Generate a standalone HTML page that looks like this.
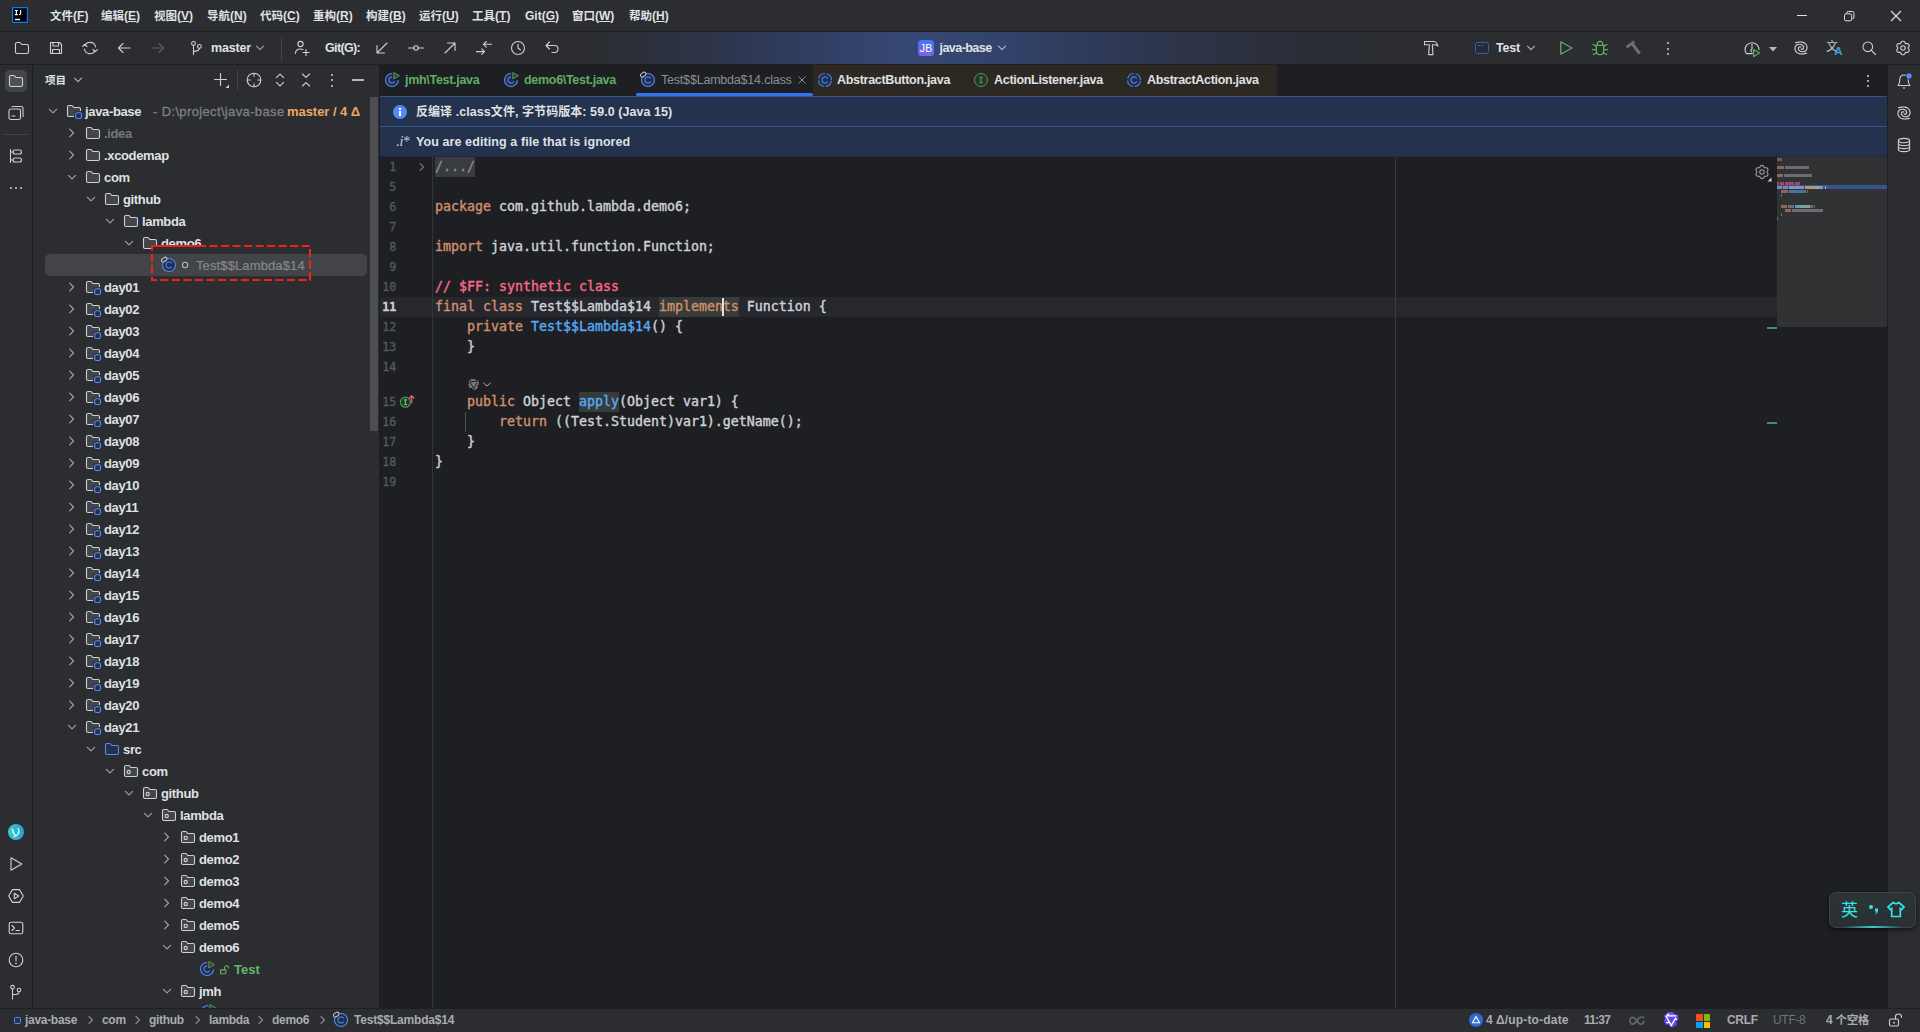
<!DOCTYPE html>
<html lang="zh-CN"><head><meta charset="utf-8"><title>java-base</title>
<style>
*{box-sizing:border-box;margin:0;padding:0}
html,body{width:1920px;height:1032px;overflow:hidden;background:#2b2d30}
body{font-family:"Liberation Sans","Noto Sans CJK SC",sans-serif;font-size:13px;color:#dfe1e5;position:relative;-webkit-font-smoothing:antialiased}
.a{position:absolute;white-space:nowrap}
.a svg{display:block}
.t{position:absolute;white-space:nowrap;line-height:24px;height:22px;font-size:13px;font-weight:bold;letter-spacing:-0.35px}
.m{position:absolute;white-space:nowrap;line-height:32px;height:32px;top:0;font-size:12px;font-weight:bold;color:#dfe1e5}
.code{position:absolute;left:435px;white-space:pre;font-family:"DejaVu Sans Mono","Liberation Mono",monospace;font-size:13.29px;line-height:20px;height:20px;color:#ced1d8;-webkit-text-stroke:0.4px}
.ln{position:absolute;left:376.2px;width:20px;text-align:right;white-space:pre;font-family:"DejaVu Sans Mono","Liberation Mono",monospace;font-size:11.7px;line-height:21px;height:20px;color:#535863;letter-spacing:-0.1px;-webkit-text-stroke:0.35px}
.z{font-weight:bold;font-size:0.96em}
.k{color:#cf8e6d}.f{color:#56a8f5}.c{color:#f9688a}
.tab{position:absolute;top:65px;height:31px;line-height:31px;font-size:12.5px;font-weight:bold;letter-spacing:-0.3px;white-space:nowrap}
.sb{position:absolute;top:1009px;height:23px;line-height:23.5px;font-size:12px;font-weight:bold;letter-spacing:-0.3px;white-space:nowrap;color:#a8abb2}
</style></head><body>
<div class="a" style="left:0;top:0;width:1920px;height:31px;background:#2b2d30"></div><div class="a" style="left:0;top:31px;width:1920px;height:1px;background:#1e1f22"></div><div class="a" style="left:0;top:32px;width:1920px;height:32px;background:linear-gradient(90deg,#2b2d30 0,#2b2d30 590px,#2d3347 700px,#313d60 800px,#354874 905px,#33436b 1000px,#2f3a58 1100px,#2d3346 1200px,#2b2e37 1300px,#2b2d30 1400px,#2b2d30 1920px)"></div><div class="a" style="left:0;top:64px;width:1920px;height:1px;background:#1e1f22"></div><div class="a" style="left:32px;top:65px;width:1px;height:943px;background:#1e1f22"></div><div class="a" style="left:379px;top:65px;width:1px;height:943px;background:#1e1f22"></div><div class="a" style="left:380px;top:65px;width:1507px;height:943px;background:#1e1f22"></div><div class="a" style="left:1887px;top:65px;width:1px;height:943px;background:#1e1f22"></div><div class="a" style="left:0;top:1008px;width:1920px;height:1px;background:#1e1f22"></div><div class="a" style="left:0;top:1009px;width:1920px;height:23px;background:#2b2d30"></div><div class="a" style="left:12px;top:7px;"><svg width="16" height="16" viewBox="0 0 16 16" style=""><rect x="0.6" y="0.6" width="14.8" height="14.8" rx="0.6" fill="#000" stroke="#087cfa" stroke-width="1.2"/><path d="M2.9 3.5 H5.8 M4.35 3.5 V7.6 M2.9 7.6 H5.8 M8.6 3 V6.5 Q8.6 7.7 7 7.6" stroke="#fff" stroke-width="1.15" fill="none"/><rect x="2.9" y="11.8" width="5.2" height="1.4" fill="#fff"/></svg></div><div class="m" style="left:50px"><span class="z">文件</span>(<u>F</u>)</div><div class="m" style="left:101px"><span class="z">编辑</span>(<u>E</u>)</div><div class="m" style="left:154px"><span class="z">视图</span>(<u>V</u>)</div><div class="m" style="left:207px"><span class="z">导航</span>(<u>N</u>)</div><div class="m" style="left:260px"><span class="z">代码</span>(<u>C</u>)</div><div class="m" style="left:313px"><span class="z">重构</span>(<u>R</u>)</div><div class="m" style="left:366px"><span class="z">构建</span>(<u>B</u>)</div><div class="m" style="left:419px"><span class="z">运行</span>(<u>U</u>)</div><div class="m" style="left:472px"><span class="z">工具</span>(<u>T</u>)</div><div class="m" style="left:525px">Git(<u>G</u>)</div><div class="m" style="left:572px"><span class="z">窗口</span>(<u>W</u>)</div><div class="m" style="left:629px"><span class="z">帮助</span>(<u>H</u>)</div><div class="a" style="left:1797px;top:15px;"><svg width="12" height="2" viewBox="0 0 12 2" style=""><rect x="0" y="0" width="10" height="1" fill="#dfe1e5"/></svg></div><div class="a" style="left:1843px;top:10px;"><svg width="12" height="12" viewBox="0 0 12 12" style=""><rect x="1.5" y="3.8" width="7.2" height="7" rx="1.6" fill="none" stroke="#dfe1e5" stroke-width="1"/><path d="M3.6 3.2 Q3.6 1.5 5.3 1.5 H9.2 Q11 1.5 11 3.3 V7 Q11 8.8 9.4 8.8" fill="none" stroke="#dfe1e5" stroke-width="1"/></svg></div><div class="a" style="left:1890px;top:10px;"><svg width="12" height="12" viewBox="0 0 12 12" style=""><path d="M1 1 L11 11 M11 1 L1 11" stroke="#dfe1e5" stroke-width="1.1" fill="none"/></svg></div><div class="a" style="left:14px;top:40px;"><svg width="16" height="16" viewBox="0 0 16 16" style=""><path d="M1.5 4 Q1.5 2.5 3 2.5 H5.6 Q6.2 2.5 6.6 3 L7.8 4.5 H13 Q14.5 4.5 14.5 6 V12 Q14.5 13.5 13 13.5 H3 Q1.5 13.5 1.5 12 Z" fill="none" stroke="#ced0d6" stroke-width="1.1" stroke-linecap="round" stroke-linejoin="round"/></svg></div><div class="a" style="left:48px;top:40px;"><svg width="16" height="16" viewBox="0 0 16 16" style=""><path d="M2.5 2.5 H11.5 L13.5 4.5 V13.5 H2.5 Z M5 2.5 V6 H10.5 V2.5 M4.5 13.5 V9.5 H11.5 V13.5" fill="none" stroke="#ced0d6" stroke-width="1.1" stroke-linecap="round" stroke-linejoin="round"/></svg></div><div class="a" style="left:82px;top:40px;"><svg width="16" height="16" viewBox="0 0 16 16" style=""><path d="M13.6 7 A5.7 5.7 0 0 0 3 5.2 M2.4 9 A5.7 5.7 0 0 0 13 10.8" fill="none" stroke="#ced0d6" stroke-width="1.1" stroke-linecap="round" stroke-linejoin="round"/><path d="M0.6 6.4 L2.8 4.4 L5 6.6 M15.4 9.6 L13.2 11.6 L11 9.4" fill="none" stroke="#ced0d6" stroke-width="1.1" stroke-linecap="round" stroke-linejoin="round"/></svg></div><div class="a" style="left:116px;top:40px;"><svg width="16" height="16" viewBox="0 0 16 16" style=""><path d="M14 8 H2.5 M7 3.5 L2.5 8 L7 12.5" fill="none" stroke="#ced0d6" stroke-width="1.1" stroke-linecap="round" stroke-linejoin="round"/></svg></div><div class="a" style="left:150px;top:40px;"><svg width="16" height="16" viewBox="0 0 16 16" style=""><path d="M2 8 H13.5 M9 3.5 L13.5 8 L9 12.5" fill="none" stroke="#5a5d63" stroke-width="1.1" stroke-linecap="round" stroke-linejoin="round"/></svg></div><div class="a" style="left:188px;top:40px;"><svg width="16" height="16" viewBox="0 0 16 16" style=""><circle cx="5.5" cy="3.4" r="1.9" fill="none" stroke="#ced0d6" stroke-width="1.1" stroke-linecap="round" stroke-linejoin="round"/><circle cx="11.4" cy="6.4" r="1.9" fill="none" stroke="#ced0d6" stroke-width="1.1" stroke-linecap="round" stroke-linejoin="round"/><path d="M5.5 5.4 V14.6 M11.4 8.4 Q11 11.3 5.8 11.4" fill="none" stroke="#ced0d6" stroke-width="1.1" stroke-linecap="round" stroke-linejoin="round"/></svg></div><div class="a" style="left:211px;top:32px;height:32px;line-height:32px;font-size:12.5px;font-weight:bold;letter-spacing:-0.2px">master</div><div class="a" style="left:255px;top:43px;"><svg width="10" height="10" viewBox="0 0 10 10" style=""><path d="M1.5 3.2 L5 6.7 L8.5 3.2" fill="none" stroke="#9da0a8" stroke-width="1.1" stroke-linecap="round" stroke-linejoin="round"/></svg></div><div class="a" style="left:281px;top:38px;width:1px;height:23px;background:#43454a"></div><div class="a" style="left:294px;top:40px;"><svg width="16" height="17" viewBox="0 0 16 17" style=""><circle cx="6.5" cy="4" r="2.6" fill="none" stroke="#ced0d6" stroke-width="1.1" stroke-linecap="round" stroke-linejoin="round"/><path d="M1.5 13.5 Q1.5 9 6.5 9 Q8 9 9 9.5 M12 9.5 V15.5 M9 12.5 H15" fill="none" stroke="#ced0d6" stroke-width="1.1" stroke-linecap="round" stroke-linejoin="round"/></svg></div><div class="a" style="left:325px;top:32px;height:32px;line-height:32px;font-size:12.5px;font-weight:bold;letter-spacing:-0.65px">Git(G):</div><div class="a" style="left:374px;top:40px;"><svg width="16" height="16" viewBox="0 0 16 16" style=""><path d="M13 3 L3 13 M3 5.5 V13 H10.5" fill="none" stroke="#ced0d6" stroke-width="1.1" stroke-linecap="round" stroke-linejoin="round"/></svg></div><div class="a" style="left:408px;top:40px;"><svg width="16" height="16" viewBox="0 0 16 16" style=""><circle cx="8" cy="8" r="2.2" fill="none" stroke="#ced0d6" stroke-width="1.1" stroke-linecap="round" stroke-linejoin="round"/><path d="M0.5 8 H5.8 M10.2 8 H15.5" fill="none" stroke="#ced0d6" stroke-width="1.1" stroke-linecap="round" stroke-linejoin="round" stroke-width="1.4"/></svg></div><div class="a" style="left:442px;top:40px;"><svg width="16" height="16" viewBox="0 0 16 16" style=""><path d="M3 13 L13 3 M5.5 3 H13 V10.5" fill="none" stroke="#ced0d6" stroke-width="1.1" stroke-linecap="round" stroke-linejoin="round"/></svg></div><div class="a" style="left:476px;top:40px;"><svg width="16" height="16" viewBox="0 0 16 16" style=""><path d="M16 4.3 H7.5 M10.3 1.5 L7.5 4.3 L10.3 7.1 M0 11.6 H8.5 M5.7 8.8 L8.5 11.6 L5.7 14.4" fill="none" stroke="#ced0d6" stroke-width="1.1" stroke-linecap="round" stroke-linejoin="round"/></svg></div><div class="a" style="left:510px;top:40px;"><svg width="16" height="16" viewBox="0 0 16 16" style=""><circle cx="8" cy="8" r="6.5" fill="none" stroke="#ced0d6" stroke-width="1.1" stroke-linecap="round" stroke-linejoin="round"/><path d="M8 4 V8 L10.5 10" fill="none" stroke="#ced0d6" stroke-width="1.1" stroke-linecap="round" stroke-linejoin="round"/></svg></div><div class="a" style="left:544px;top:40px;"><svg width="16" height="16" viewBox="0 0 16 16" style=""><path d="M5.5 2 L2 5.5 L5.5 9 M2 5.5 H10.5 Q14 5.5 14 9 Q14 12.5 10.5 12.5 H8" fill="none" stroke="#ced0d6" stroke-width="1.1" stroke-linecap="round" stroke-linejoin="round"/></svg></div><div class="a" style="left:918px;top:40px;width:16px;height:16px;border-radius:3.5px;background:linear-gradient(200deg,#3b7df6 0%,#5d6bee 50%,#8a5fe8 100%);color:#fff;font-size:10.5px;line-height:16.5px;text-align:center;font-weight:normal;letter-spacing:0.4px;text-indent:0.4px">JB</div><div class="a" style="left:939.5px;top:32px;height:32px;line-height:32px;font-size:12.5px;font-weight:bold;letter-spacing:-0.55px">java-base</div><div class="a" style="left:997px;top:43px;"><svg width="10" height="10" viewBox="0 0 10 10" style=""><path d="M1.5 3.2 L5 6.7 L8.5 3.2" fill="none" stroke="#b4b8bf" stroke-width="1.1" stroke-linecap="round" stroke-linejoin="round"/></svg></div><div class="a" style="left:1423px;top:40px;"><svg width="16" height="16" viewBox="0 0 16 16" style=""><path d="M1.5 1.5 H11 Q13.8 1.8 15 6 Q13 4.7 10.5 4.8 H9.3 L10 14.6 H5.6 L6.4 4.8 H1.5 Z" fill="none" stroke="#ced0d6" stroke-width="1.1" stroke-linecap="round" stroke-linejoin="round"/></svg></div><div class="a" style="left:1475px;top:42px;width:14px;height:12px;border-radius:2.5px;border:1px solid #3d5fa3;background:#232a3c"></div><div class="a" style="left:1478px;top:45px;width:2px;height:1px;background:#3d5fa3"></div><div class="a" style="left:1481px;top:45px;width:2px;height:1px;background:#3d5fa3"></div><div class="a" style="left:1496px;top:32px;height:32px;line-height:32px;font-size:12.5px;font-weight:bold;letter-spacing:-0.2px">Test</div><div class="a" style="left:1526px;top:43px;"><svg width="10" height="10" viewBox="0 0 10 10" style=""><path d="M1.5 3.2 L5 6.7 L8.5 3.2" fill="none" stroke="#b4b8bf" stroke-width="1.1" stroke-linecap="round" stroke-linejoin="round"/></svg></div><div class="a" style="left:1558px;top:40px;"><svg width="16" height="16" viewBox="0 0 16 16" style=""><path d="M2.8 1.8 L14 8 L2.8 14.2 Z" fill="none" stroke="#5fad65" stroke-width="1.3" stroke-linecap="round" stroke-linejoin="round"/></svg></div><div class="a" style="left:1592px;top:40px;"><svg width="16" height="16" viewBox="0 0 16 16" style=""><path d="M5.1 5.4 Q5.1 1.3 8 1.3 Q10.9 1.3 10.9 5.4 M4.3 5.4 H11.7 V10.8 Q11.7 14.8 8 14.8 Q4.3 14.8 4.3 10.8 Z M4.3 9.7 H0.6 M11.7 9.7 H15.4 M4.4 6.4 L1.1 4.5 M11.6 6.4 L14.9 4.5 M4.9 12.8 L1.3 14.5 M11.1 12.8 L14.7 14.5" fill="none" stroke="#5fad65" stroke-width="1.3" stroke-linecap="round" stroke-linejoin="round" stroke-width="1.5"/></svg></div><div class="a" style="left:1625px;top:40px;"><svg width="16" height="16" viewBox="0 0 16 16" style=""><path d="M1.6 7.4 L9.3 1.7" stroke="#6c6f76" stroke-width="2.9" fill="none"/><path d="M7.4 4 L14.7 13.7" stroke="#6c6f76" stroke-width="3" fill="none"/></svg></div><div class="a" style="left:1667px;top:42px;width:2px;height:2px;border-radius:1px;background:#ced0d6"></div><div class="a" style="left:1667px;top:47.5px;width:2px;height:2px;border-radius:1px;background:#ced0d6"></div><div class="a" style="left:1667px;top:53px;width:2px;height:2px;border-radius:1px;background:#ced0d6"></div><div class="a" style="left:1744px;top:40.5px;"><svg width="17" height="17" viewBox="0 0 17 17" style=""><path d="M8.3 12.6 H2.6 Q1 11 1 9 A7 7 0 0 1 15 8.6" fill="none" stroke="#ced0d6" stroke-width="1.1" stroke-linecap="round" stroke-linejoin="round"/><path d="M8 3.2 V8 Q6.6 8.6 7 10 Q7.3 10.8 8 11" fill="none" stroke="#ced0d6" stroke-width="1.1" stroke-linecap="round" stroke-linejoin="round"/><path d="M9.6 8.6 L15.6 12.1 L9.6 15.6 Z" fill="#233527" stroke="#5fad65" stroke-width="1.2" stroke-linejoin="round"/></svg></div><div class="a" style="left:1769px;top:47px;"><svg width="8" height="5" viewBox="0 0 8 5" style=""><path d="M0 0 H8 L4 4.6 Z" fill="#b4b8bf"/></svg></div><div class="a" style="left:1793px;top:40px;"><svg width="16" height="16" viewBox="0 0 16 16" style=""><path d="M2.40 2.70 C2.92 2.60 4.40 2.20 5.50 2.10 C6.60 2.00 7.92 1.88 9.00 2.10 C10.08 2.32 11.20 2.75 12.00 3.40 C12.80 4.05 13.48 5.10 13.80 6.00 C14.12 6.90 14.13 7.98 13.90 8.80 C13.67 9.62 13.13 10.42 12.40 10.90 C11.67 11.38 10.43 11.68 9.50 11.70 C8.57 11.72 7.48 11.45 6.80 11.00 C6.12 10.55 5.58 9.60 5.40 9.00 C5.22 8.40 5.47 7.78 5.70 7.40 C5.93 7.02 6.45 6.75 6.80 6.70 C7.15 6.65 7.63 7.03 7.80 7.10" fill="none" stroke="#ced0d6" stroke-width="1.15" stroke-linecap="round"/><path d="M13.60 13.30 C13.08 13.40 11.60 13.80 10.50 13.90 C9.40 14.00 8.08 14.12 7.00 13.90 C5.92 13.68 4.80 13.25 4.00 12.60 C3.20 11.95 2.52 10.90 2.20 10.00 C1.88 9.10 1.87 8.02 2.10 7.20 C2.33 6.38 2.87 5.58 3.60 5.10 C4.33 4.62 5.57 4.32 6.50 4.30 C7.43 4.28 8.52 4.55 9.20 5.00 C9.88 5.45 10.42 6.40 10.60 7.00 C10.78 7.60 10.53 8.22 10.30 8.60 C10.07 8.98 9.55 9.25 9.20 9.30 C8.85 9.35 8.37 8.97 8.20 8.90" fill="none" stroke="#ced0d6" stroke-width="1.15" stroke-linecap="round"/></svg></div><div class="a" style="left:1826px;top:38.5px;font-size:12px;line-height:14px;color:#c4c7cd;font-family:'Noto Sans CJK SC',sans-serif;font-weight:normal">文</div><div class="a" style="left:1834.3px;top:44.5px;font-size:11.5px;line-height:12px;color:#3aa0dc;font-weight:bold">A</div><div class="a" style="left:1861px;top:40px;"><svg width="16" height="16" viewBox="0 0 16 16" style=""><circle cx="6.8" cy="6.8" r="4.8" fill="none" stroke="#ced0d6" stroke-width="1.1" stroke-linecap="round" stroke-linejoin="round"/><path d="M10.4 10.4 L14.5 14.5" fill="none" stroke="#ced0d6" stroke-width="1.1" stroke-linecap="round" stroke-linejoin="round"/></svg></div><div class="a" style="left:1895px;top:40px;"><svg width="16" height="16" viewBox="0 0 16 16" style=""><path d="M6.74 1.52 C7.38 1.18 8.62 1.18 9.26 1.52 C9.90 1.86 9.95 3.18 10.57 3.54 C11.19 3.90 12.37 3.29 12.98 3.67 C13.59 4.05 14.21 5.13 14.24 5.85 C14.27 6.57 13.15 7.28 13.15 8.00 C13.15 8.72 14.27 9.43 14.24 10.15 C14.21 10.87 13.59 11.95 12.98 12.33 C12.37 12.71 11.19 12.10 10.57 12.46 C9.95 12.82 9.90 14.14 9.26 14.48 C8.62 14.82 7.38 14.82 6.74 14.48 C6.10 14.14 6.05 12.82 5.43 12.46 C4.81 12.10 3.63 12.71 3.02 12.33 C2.41 11.95 1.79 10.87 1.76 10.15 C1.73 9.43 2.85 8.72 2.85 8.00 C2.85 7.28 1.73 6.57 1.76 5.85 C1.79 5.13 2.41 4.05 3.02 3.67 C3.63 3.29 4.81 3.90 5.43 3.54 C6.05 3.18 6.10 1.86 6.74 1.52 Z" fill="none" stroke="#ced0d6" stroke-width="1.1" stroke-linejoin="round"/><circle cx="8" cy="8" r="2.24" fill="none" stroke="#ced0d6" stroke-width="1.1"/></svg></div><div class="a" style="left:5px;top:70px;width:22px;height:22px;border-radius:5px;background:#43454a"></div><div class="a" style="left:8px;top:73px;"><svg width="16" height="16" viewBox="0 0 16 16" style=""><path d="M1.5 4 Q1.5 2.5 3 2.5 H5.6 Q6.2 2.5 6.6 3 L7.8 4.5 H13 Q14.5 4.5 14.5 6 V12 Q14.5 13.5 13 13.5 H3 Q1.5 13.5 1.5 12 Z" fill="#4e5157" stroke="#ced0d6" stroke-width="1.1"/></svg></div><div class="a" style="left:8px;top:104.5px;"><svg width="16" height="16" viewBox="0 0 16 16" style=""><rect x="1" y="4" width="11.5" height="10.5" rx="1.8" fill="none" stroke="#ced0d6" stroke-width="1.1" stroke-linecap="round" stroke-linejoin="round"/><path d="M4 1.5 H13 Q15 1.5 15 3.5 V11.5" fill="none" stroke="#ced0d6" stroke-width="1.1" stroke-linecap="round" stroke-linejoin="round"/><path d="M4 11 H7" fill="none" stroke="#ced0d6" stroke-width="1.1" stroke-linecap="round" stroke-linejoin="round"/></svg></div><div class="a" style="left:4px;top:134px;width:24px;height:1px;background:#43454a"></div><div class="a" style="left:8px;top:148px;"><svg width="16" height="16" viewBox="0 0 16 16" style=""><path d="M2.5 1.5 V14.5" fill="none" stroke="#ced0d6" stroke-width="1.1" stroke-linecap="round" stroke-linejoin="round"/><rect x="5" y="2" width="8.5" height="4" rx="2" fill="none" stroke="#ced0d6" stroke-width="1.1" stroke-linecap="round" stroke-linejoin="round"/><rect x="5" y="10" width="8.5" height="4" rx="2" fill="none" stroke="#ced0d6" stroke-width="1.1" stroke-linecap="round" stroke-linejoin="round"/><path d="M2.5 4 H5 M2.5 12 H5" fill="none" stroke="#ced0d6" stroke-width="1.1" stroke-linecap="round" stroke-linejoin="round"/></svg></div><div class="a" style="left:10px;top:187px;width:2px;height:2px;border-radius:1px;background:#ced0d6"></div><div class="a" style="left:15px;top:187px;width:2px;height:2px;border-radius:1px;background:#ced0d6"></div><div class="a" style="left:20px;top:187px;width:2px;height:2px;border-radius:1px;background:#ced0d6"></div><div class="a" style="left:8px;top:824px;width:16px;height:16px;border-radius:8px;background:linear-gradient(90deg,#3bcdc6 0%,#2fb4cf 50%,#2a9edb 100%)"></div><div class="a" style="left:8px;top:824px;"><svg width="16" height="16" viewBox="0 0 16 16" style=""><path d="M4.4 5.2 Q4.6 9 7 10.9" fill="none" stroke="#fff" stroke-width="1.5" stroke-linecap="round" opacity="0.9"/><path d="M10 4.5 Q12 7.5 9.9 10.2 Q8.3 12.1 6.1 12.6" fill="none" stroke="#fff" stroke-width="1.3" stroke-linecap="round" opacity="0.9"/></svg></div><div class="a" style="left:8px;top:856px;"><svg width="16" height="16" viewBox="0 0 16 16" style=""><path d="M3 1.8 L13.8 8 L3 14.2 Z" fill="none" stroke="#ced0d6" stroke-width="1.1" stroke-linecap="round" stroke-linejoin="round"/></svg></div><div class="a" style="left:8px;top:888px;"><svg width="16" height="16" viewBox="0 0 16 16" style=""><path d="M4.5 1.6 H11.5 L15.3 8 L11.5 14.4 H4.5 L0.7 8 Z" fill="none" stroke="#ced0d6" stroke-width="1.1" stroke-linecap="round" stroke-linejoin="round"/><path d="M6.3 5.2 L10.8 8 L6.3 10.8 Z" fill="none" stroke="#ced0d6" stroke-width="1.1" stroke-linecap="round" stroke-linejoin="round"/></svg></div><div class="a" style="left:8px;top:920px;"><svg width="16" height="16" viewBox="0 0 16 16" style=""><rect x="1.2" y="2.2" width="13.6" height="11.6" rx="1.8" fill="none" stroke="#ced0d6" stroke-width="1.1" stroke-linecap="round" stroke-linejoin="round"/><path d="M4 5.5 L6.5 8 L4 10.5 M8 10.5 H11.5" fill="none" stroke="#ced0d6" stroke-width="1.1" stroke-linecap="round" stroke-linejoin="round"/></svg></div><div class="a" style="left:8px;top:952px;"><svg width="16" height="16" viewBox="0 0 16 16" style=""><circle cx="8" cy="8" r="6.8" fill="none" stroke="#ced0d6" stroke-width="1.1" stroke-linecap="round" stroke-linejoin="round"/><path d="M8 4.2 V8.8" fill="none" stroke="#ced0d6" stroke-width="1.1" stroke-linecap="round" stroke-linejoin="round" stroke-width="1.4"/><circle cx="8" cy="11.3" r="0.9" fill="#ced0d6"/></svg></div><div class="a" style="left:8px;top:984px;"><svg width="16" height="16" viewBox="0 0 16 16" style=""><circle cx="4.5" cy="3.2" r="1.8" fill="none" stroke="#ced0d6" stroke-width="1.1" stroke-linecap="round" stroke-linejoin="round"/><circle cx="11" cy="6" r="1.8" fill="none" stroke="#ced0d6" stroke-width="1.1" stroke-linecap="round" stroke-linejoin="round"/><path d="M4.5 5 V15 M11 7.8 Q11 10.5 7.5 10.5 H5" fill="none" stroke="#ced0d6" stroke-width="1.1" stroke-linecap="round" stroke-linejoin="round"/></svg></div><div class="a" style="left:45px;top:69px;height:22px;line-height:22px;font-size:11px;font-weight:bold;font-family:'Liberation Sans','Noto Sans CJK SC',sans-serif"><span class="z">项目</span></div><div class="a" style="left:73px;top:75px;"><svg width="10" height="10" viewBox="0 0 10 10" style=""><path d="M1.5 3.2 L5 6.7 L8.5 3.2" fill="none" stroke="#b4b8bf" stroke-width="1.1" stroke-linecap="round" stroke-linejoin="round"/></svg></div><div class="a" style="left:213px;top:72px;"><svg width="18" height="18" viewBox="0 0 18 18" style=""><path d="M7.5 1.5 V13.5 M1.5 7.5 H13.5" fill="none" stroke="#ced0d6" stroke-width="1.1" stroke-linecap="round" stroke-linejoin="round"/><path d="M16 12.5 V16 H12.5 Z" fill="#ced0d6"/></svg></div><div class="a" style="left:237px;top:70px;width:1px;height:20px;background:#43454a"></div><div class="a" style="left:246px;top:72px;"><svg width="16" height="16" viewBox="0 0 16 16" style=""><circle cx="8" cy="8" r="6.8" fill="none" stroke="#ced0d6" stroke-width="1.1" stroke-linecap="round" stroke-linejoin="round"/><path d="M8 1.2 V4.2 M8 11.8 V14.8 M1.2 8 H4.2 M11.8 8 H14.8" fill="none" stroke="#ced0d6" stroke-width="1.1" stroke-linecap="round" stroke-linejoin="round" stroke="#9da0a8"/></svg></div><div class="a" style="left:272px;top:72px;"><svg width="16" height="16" viewBox="0 0 16 16" style=""><path d="M4.4 5.6 L8 2.2 L11.6 5.6 M4.4 10.4 L8 13.8 L11.6 10.4" fill="none" stroke="#ced0d6" stroke-width="1.1" stroke-linecap="round" stroke-linejoin="round"/></svg></div><div class="a" style="left:298px;top:72px;"><svg width="16" height="16" viewBox="0 0 16 16" style=""><path d="M4.4 2 L8 5.4 L11.6 2 M4.4 14 L8 10.6 L11.6 14" fill="none" stroke="#ced0d6" stroke-width="1.1" stroke-linecap="round" stroke-linejoin="round"/></svg></div><div class="a" style="left:331px;top:74px;width:2px;height:2px;border-radius:1px;background:#ced0d6"></div><div class="a" style="left:331px;top:79px;width:2px;height:2px;border-radius:1px;background:#ced0d6"></div><div class="a" style="left:331px;top:84.5px;width:2px;height:2px;border-radius:1px;background:#ced0d6"></div><div class="a" style="left:351.5px;top:79px;width:12.5px;height:1.6px;background:#b4b8bf"></div><div class="a" style="left:370px;top:97px;width:8px;height:334px;background:#4d4e51"></div><div class="a" style="left:45px;top:103px;"><svg width="16" height="16" viewBox="0 0 16 16" style=""><path d="M4.4 6.3 L8 9.9 L11.6 6.3" fill="none" stroke="#9da0a8" stroke-width="1.2" stroke-linecap="round" stroke-linejoin="round"/></svg></div><div class="a" style="left:66px;top:103px;"><svg width="16" height="16" viewBox="0 0 16 16" style="overflow:visible"><path d="M8.5 13.5 H3 Q1.5 13.5 1.5 12 V4 Q1.5 2.5 3 2.5 H5.6 Q6.2 2.5 6.6 3 L7.8 4.5 H13 Q14.5 4.5 14.5 6 V8.5 H8.5 Z" fill="#43454a" stroke="none"/><path d="M8 13.5 H3 Q1.5 13.5 1.5 12 V4 Q1.5 2.5 3 2.5 H5.6 Q6.2 2.5 6.6 3 L7.8 4.5 H13 Q14.5 4.5 14.5 6 V8" fill="none" stroke="#ced0d6" stroke-width="1.1"/><rect x="9.7" y="9.7" width="5.8" height="5.8" rx="1.5" fill="#25324d" stroke="#548af7" stroke-width="1.15"/></svg></div><div class="t" style="left:85px;top:100px;color:#dfe1e5">java-base</div><div class="a" style="left:64px;top:125px;"><svg width="16" height="16" viewBox="0 0 16 16" style=""><path d="M5.7 4.2 L9.5 8 L5.7 11.8" fill="none" stroke="#9da0a8" stroke-width="1.2" stroke-linecap="round" stroke-linejoin="round"/></svg></div><div class="a" style="left:85px;top:125px;"><svg width="16" height="16" viewBox="0 0 16 16" style=""><path d="M1.5 4 Q1.5 2.5 3 2.5 H5.6 Q6.2 2.5 6.6 3 L7.8 4.5 H13 Q14.5 4.5 14.5 6 V12 Q14.5 13.5 13 13.5 H3 Q1.5 13.5 1.5 12 Z" fill="#43454a" stroke="#ced0d6" stroke-width="1.1"/></svg></div><div class="t" style="left:104px;top:122px;color:#74777d">.idea</div><div class="a" style="left:64px;top:147px;"><svg width="16" height="16" viewBox="0 0 16 16" style=""><path d="M5.7 4.2 L9.5 8 L5.7 11.8" fill="none" stroke="#9da0a8" stroke-width="1.2" stroke-linecap="round" stroke-linejoin="round"/></svg></div><div class="a" style="left:85px;top:147px;"><svg width="16" height="16" viewBox="0 0 16 16" style=""><path d="M1.5 4 Q1.5 2.5 3 2.5 H5.6 Q6.2 2.5 6.6 3 L7.8 4.5 H13 Q14.5 4.5 14.5 6 V12 Q14.5 13.5 13 13.5 H3 Q1.5 13.5 1.5 12 Z" fill="#43454a" stroke="#ced0d6" stroke-width="1.1"/></svg></div><div class="t" style="left:104px;top:144px;color:#dfe1e5">.xcodemap</div><div class="a" style="left:64px;top:169px;"><svg width="16" height="16" viewBox="0 0 16 16" style=""><path d="M4.4 6.3 L8 9.9 L11.6 6.3" fill="none" stroke="#9da0a8" stroke-width="1.2" stroke-linecap="round" stroke-linejoin="round"/></svg></div><div class="a" style="left:85px;top:169px;"><svg width="16" height="16" viewBox="0 0 16 16" style=""><path d="M1.5 4 Q1.5 2.5 3 2.5 H5.6 Q6.2 2.5 6.6 3 L7.8 4.5 H13 Q14.5 4.5 14.5 6 V12 Q14.5 13.5 13 13.5 H3 Q1.5 13.5 1.5 12 Z" fill="#43454a" stroke="#ced0d6" stroke-width="1.1"/></svg></div><div class="t" style="left:104px;top:166px;color:#dfe1e5">com</div><div class="a" style="left:83px;top:191px;"><svg width="16" height="16" viewBox="0 0 16 16" style=""><path d="M4.4 6.3 L8 9.9 L11.6 6.3" fill="none" stroke="#9da0a8" stroke-width="1.2" stroke-linecap="round" stroke-linejoin="round"/></svg></div><div class="a" style="left:104px;top:191px;"><svg width="16" height="16" viewBox="0 0 16 16" style=""><path d="M1.5 4 Q1.5 2.5 3 2.5 H5.6 Q6.2 2.5 6.6 3 L7.8 4.5 H13 Q14.5 4.5 14.5 6 V12 Q14.5 13.5 13 13.5 H3 Q1.5 13.5 1.5 12 Z" fill="#43454a" stroke="#ced0d6" stroke-width="1.1"/></svg></div><div class="t" style="left:123px;top:188px;color:#dfe1e5">github</div><div class="a" style="left:102px;top:213px;"><svg width="16" height="16" viewBox="0 0 16 16" style=""><path d="M4.4 6.3 L8 9.9 L11.6 6.3" fill="none" stroke="#9da0a8" stroke-width="1.2" stroke-linecap="round" stroke-linejoin="round"/></svg></div><div class="a" style="left:123px;top:213px;"><svg width="16" height="16" viewBox="0 0 16 16" style=""><path d="M1.5 4 Q1.5 2.5 3 2.5 H5.6 Q6.2 2.5 6.6 3 L7.8 4.5 H13 Q14.5 4.5 14.5 6 V12 Q14.5 13.5 13 13.5 H3 Q1.5 13.5 1.5 12 Z" fill="#43454a" stroke="#ced0d6" stroke-width="1.1"/></svg></div><div class="t" style="left:142px;top:210px;color:#dfe1e5">lambda</div><div class="a" style="left:121px;top:235px;"><svg width="16" height="16" viewBox="0 0 16 16" style=""><path d="M4.4 6.3 L8 9.9 L11.6 6.3" fill="none" stroke="#9da0a8" stroke-width="1.2" stroke-linecap="round" stroke-linejoin="round"/></svg></div><div class="a" style="left:142px;top:235px;"><svg width="16" height="16" viewBox="0 0 16 16" style=""><path d="M1.5 4 Q1.5 2.5 3 2.5 H5.6 Q6.2 2.5 6.6 3 L7.8 4.5 H13 Q14.5 4.5 14.5 6 V12 Q14.5 13.5 13 13.5 H3 Q1.5 13.5 1.5 12 Z" fill="#43454a" stroke="#ced0d6" stroke-width="1.1"/></svg></div><div class="t" style="left:161px;top:232px;color:#dfe1e5">demo6</div><div class="a" style="left:64px;top:279px;"><svg width="16" height="16" viewBox="0 0 16 16" style=""><path d="M5.7 4.2 L9.5 8 L5.7 11.8" fill="none" stroke="#9da0a8" stroke-width="1.2" stroke-linecap="round" stroke-linejoin="round"/></svg></div><div class="a" style="left:85px;top:279px;"><svg width="16" height="16" viewBox="0 0 16 16" style="overflow:visible"><path d="M8.5 13.5 H3 Q1.5 13.5 1.5 12 V4 Q1.5 2.5 3 2.5 H5.6 Q6.2 2.5 6.6 3 L7.8 4.5 H13 Q14.5 4.5 14.5 6 V8.5 H8.5 Z" fill="#43454a" stroke="none"/><path d="M8 13.5 H3 Q1.5 13.5 1.5 12 V4 Q1.5 2.5 3 2.5 H5.6 Q6.2 2.5 6.6 3 L7.8 4.5 H13 Q14.5 4.5 14.5 6 V8" fill="none" stroke="#ced0d6" stroke-width="1.1"/><rect x="9.7" y="9.7" width="5.8" height="5.8" rx="1.5" fill="#25324d" stroke="#548af7" stroke-width="1.15"/></svg></div><div class="t" style="left:104px;top:276px;color:#dfe1e5">day01</div><div class="a" style="left:64px;top:301px;"><svg width="16" height="16" viewBox="0 0 16 16" style=""><path d="M5.7 4.2 L9.5 8 L5.7 11.8" fill="none" stroke="#9da0a8" stroke-width="1.2" stroke-linecap="round" stroke-linejoin="round"/></svg></div><div class="a" style="left:85px;top:301px;"><svg width="16" height="16" viewBox="0 0 16 16" style="overflow:visible"><path d="M8.5 13.5 H3 Q1.5 13.5 1.5 12 V4 Q1.5 2.5 3 2.5 H5.6 Q6.2 2.5 6.6 3 L7.8 4.5 H13 Q14.5 4.5 14.5 6 V8.5 H8.5 Z" fill="#43454a" stroke="none"/><path d="M8 13.5 H3 Q1.5 13.5 1.5 12 V4 Q1.5 2.5 3 2.5 H5.6 Q6.2 2.5 6.6 3 L7.8 4.5 H13 Q14.5 4.5 14.5 6 V8" fill="none" stroke="#ced0d6" stroke-width="1.1"/><rect x="9.7" y="9.7" width="5.8" height="5.8" rx="1.5" fill="#25324d" stroke="#548af7" stroke-width="1.15"/></svg></div><div class="t" style="left:104px;top:298px;color:#dfe1e5">day02</div><div class="a" style="left:64px;top:323px;"><svg width="16" height="16" viewBox="0 0 16 16" style=""><path d="M5.7 4.2 L9.5 8 L5.7 11.8" fill="none" stroke="#9da0a8" stroke-width="1.2" stroke-linecap="round" stroke-linejoin="round"/></svg></div><div class="a" style="left:85px;top:323px;"><svg width="16" height="16" viewBox="0 0 16 16" style="overflow:visible"><path d="M8.5 13.5 H3 Q1.5 13.5 1.5 12 V4 Q1.5 2.5 3 2.5 H5.6 Q6.2 2.5 6.6 3 L7.8 4.5 H13 Q14.5 4.5 14.5 6 V8.5 H8.5 Z" fill="#43454a" stroke="none"/><path d="M8 13.5 H3 Q1.5 13.5 1.5 12 V4 Q1.5 2.5 3 2.5 H5.6 Q6.2 2.5 6.6 3 L7.8 4.5 H13 Q14.5 4.5 14.5 6 V8" fill="none" stroke="#ced0d6" stroke-width="1.1"/><rect x="9.7" y="9.7" width="5.8" height="5.8" rx="1.5" fill="#25324d" stroke="#548af7" stroke-width="1.15"/></svg></div><div class="t" style="left:104px;top:320px;color:#dfe1e5">day03</div><div class="a" style="left:64px;top:345px;"><svg width="16" height="16" viewBox="0 0 16 16" style=""><path d="M5.7 4.2 L9.5 8 L5.7 11.8" fill="none" stroke="#9da0a8" stroke-width="1.2" stroke-linecap="round" stroke-linejoin="round"/></svg></div><div class="a" style="left:85px;top:345px;"><svg width="16" height="16" viewBox="0 0 16 16" style="overflow:visible"><path d="M8.5 13.5 H3 Q1.5 13.5 1.5 12 V4 Q1.5 2.5 3 2.5 H5.6 Q6.2 2.5 6.6 3 L7.8 4.5 H13 Q14.5 4.5 14.5 6 V8.5 H8.5 Z" fill="#43454a" stroke="none"/><path d="M8 13.5 H3 Q1.5 13.5 1.5 12 V4 Q1.5 2.5 3 2.5 H5.6 Q6.2 2.5 6.6 3 L7.8 4.5 H13 Q14.5 4.5 14.5 6 V8" fill="none" stroke="#ced0d6" stroke-width="1.1"/><rect x="9.7" y="9.7" width="5.8" height="5.8" rx="1.5" fill="#25324d" stroke="#548af7" stroke-width="1.15"/></svg></div><div class="t" style="left:104px;top:342px;color:#dfe1e5">day04</div><div class="a" style="left:64px;top:367px;"><svg width="16" height="16" viewBox="0 0 16 16" style=""><path d="M5.7 4.2 L9.5 8 L5.7 11.8" fill="none" stroke="#9da0a8" stroke-width="1.2" stroke-linecap="round" stroke-linejoin="round"/></svg></div><div class="a" style="left:85px;top:367px;"><svg width="16" height="16" viewBox="0 0 16 16" style="overflow:visible"><path d="M8.5 13.5 H3 Q1.5 13.5 1.5 12 V4 Q1.5 2.5 3 2.5 H5.6 Q6.2 2.5 6.6 3 L7.8 4.5 H13 Q14.5 4.5 14.5 6 V8.5 H8.5 Z" fill="#43454a" stroke="none"/><path d="M8 13.5 H3 Q1.5 13.5 1.5 12 V4 Q1.5 2.5 3 2.5 H5.6 Q6.2 2.5 6.6 3 L7.8 4.5 H13 Q14.5 4.5 14.5 6 V8" fill="none" stroke="#ced0d6" stroke-width="1.1"/><rect x="9.7" y="9.7" width="5.8" height="5.8" rx="1.5" fill="#25324d" stroke="#548af7" stroke-width="1.15"/></svg></div><div class="t" style="left:104px;top:364px;color:#dfe1e5">day05</div><div class="a" style="left:64px;top:389px;"><svg width="16" height="16" viewBox="0 0 16 16" style=""><path d="M5.7 4.2 L9.5 8 L5.7 11.8" fill="none" stroke="#9da0a8" stroke-width="1.2" stroke-linecap="round" stroke-linejoin="round"/></svg></div><div class="a" style="left:85px;top:389px;"><svg width="16" height="16" viewBox="0 0 16 16" style="overflow:visible"><path d="M8.5 13.5 H3 Q1.5 13.5 1.5 12 V4 Q1.5 2.5 3 2.5 H5.6 Q6.2 2.5 6.6 3 L7.8 4.5 H13 Q14.5 4.5 14.5 6 V8.5 H8.5 Z" fill="#43454a" stroke="none"/><path d="M8 13.5 H3 Q1.5 13.5 1.5 12 V4 Q1.5 2.5 3 2.5 H5.6 Q6.2 2.5 6.6 3 L7.8 4.5 H13 Q14.5 4.5 14.5 6 V8" fill="none" stroke="#ced0d6" stroke-width="1.1"/><rect x="9.7" y="9.7" width="5.8" height="5.8" rx="1.5" fill="#25324d" stroke="#548af7" stroke-width="1.15"/></svg></div><div class="t" style="left:104px;top:386px;color:#dfe1e5">day06</div><div class="a" style="left:64px;top:411px;"><svg width="16" height="16" viewBox="0 0 16 16" style=""><path d="M5.7 4.2 L9.5 8 L5.7 11.8" fill="none" stroke="#9da0a8" stroke-width="1.2" stroke-linecap="round" stroke-linejoin="round"/></svg></div><div class="a" style="left:85px;top:411px;"><svg width="16" height="16" viewBox="0 0 16 16" style="overflow:visible"><path d="M8.5 13.5 H3 Q1.5 13.5 1.5 12 V4 Q1.5 2.5 3 2.5 H5.6 Q6.2 2.5 6.6 3 L7.8 4.5 H13 Q14.5 4.5 14.5 6 V8.5 H8.5 Z" fill="#43454a" stroke="none"/><path d="M8 13.5 H3 Q1.5 13.5 1.5 12 V4 Q1.5 2.5 3 2.5 H5.6 Q6.2 2.5 6.6 3 L7.8 4.5 H13 Q14.5 4.5 14.5 6 V8" fill="none" stroke="#ced0d6" stroke-width="1.1"/><rect x="9.7" y="9.7" width="5.8" height="5.8" rx="1.5" fill="#25324d" stroke="#548af7" stroke-width="1.15"/></svg></div><div class="t" style="left:104px;top:408px;color:#dfe1e5">day07</div><div class="a" style="left:64px;top:433px;"><svg width="16" height="16" viewBox="0 0 16 16" style=""><path d="M5.7 4.2 L9.5 8 L5.7 11.8" fill="none" stroke="#9da0a8" stroke-width="1.2" stroke-linecap="round" stroke-linejoin="round"/></svg></div><div class="a" style="left:85px;top:433px;"><svg width="16" height="16" viewBox="0 0 16 16" style="overflow:visible"><path d="M8.5 13.5 H3 Q1.5 13.5 1.5 12 V4 Q1.5 2.5 3 2.5 H5.6 Q6.2 2.5 6.6 3 L7.8 4.5 H13 Q14.5 4.5 14.5 6 V8.5 H8.5 Z" fill="#43454a" stroke="none"/><path d="M8 13.5 H3 Q1.5 13.5 1.5 12 V4 Q1.5 2.5 3 2.5 H5.6 Q6.2 2.5 6.6 3 L7.8 4.5 H13 Q14.5 4.5 14.5 6 V8" fill="none" stroke="#ced0d6" stroke-width="1.1"/><rect x="9.7" y="9.7" width="5.8" height="5.8" rx="1.5" fill="#25324d" stroke="#548af7" stroke-width="1.15"/></svg></div><div class="t" style="left:104px;top:430px;color:#dfe1e5">day08</div><div class="a" style="left:64px;top:455px;"><svg width="16" height="16" viewBox="0 0 16 16" style=""><path d="M5.7 4.2 L9.5 8 L5.7 11.8" fill="none" stroke="#9da0a8" stroke-width="1.2" stroke-linecap="round" stroke-linejoin="round"/></svg></div><div class="a" style="left:85px;top:455px;"><svg width="16" height="16" viewBox="0 0 16 16" style="overflow:visible"><path d="M8.5 13.5 H3 Q1.5 13.5 1.5 12 V4 Q1.5 2.5 3 2.5 H5.6 Q6.2 2.5 6.6 3 L7.8 4.5 H13 Q14.5 4.5 14.5 6 V8.5 H8.5 Z" fill="#43454a" stroke="none"/><path d="M8 13.5 H3 Q1.5 13.5 1.5 12 V4 Q1.5 2.5 3 2.5 H5.6 Q6.2 2.5 6.6 3 L7.8 4.5 H13 Q14.5 4.5 14.5 6 V8" fill="none" stroke="#ced0d6" stroke-width="1.1"/><rect x="9.7" y="9.7" width="5.8" height="5.8" rx="1.5" fill="#25324d" stroke="#548af7" stroke-width="1.15"/></svg></div><div class="t" style="left:104px;top:452px;color:#dfe1e5">day09</div><div class="a" style="left:64px;top:477px;"><svg width="16" height="16" viewBox="0 0 16 16" style=""><path d="M5.7 4.2 L9.5 8 L5.7 11.8" fill="none" stroke="#9da0a8" stroke-width="1.2" stroke-linecap="round" stroke-linejoin="round"/></svg></div><div class="a" style="left:85px;top:477px;"><svg width="16" height="16" viewBox="0 0 16 16" style="overflow:visible"><path d="M8.5 13.5 H3 Q1.5 13.5 1.5 12 V4 Q1.5 2.5 3 2.5 H5.6 Q6.2 2.5 6.6 3 L7.8 4.5 H13 Q14.5 4.5 14.5 6 V8.5 H8.5 Z" fill="#43454a" stroke="none"/><path d="M8 13.5 H3 Q1.5 13.5 1.5 12 V4 Q1.5 2.5 3 2.5 H5.6 Q6.2 2.5 6.6 3 L7.8 4.5 H13 Q14.5 4.5 14.5 6 V8" fill="none" stroke="#ced0d6" stroke-width="1.1"/><rect x="9.7" y="9.7" width="5.8" height="5.8" rx="1.5" fill="#25324d" stroke="#548af7" stroke-width="1.15"/></svg></div><div class="t" style="left:104px;top:474px;color:#dfe1e5">day10</div><div class="a" style="left:64px;top:499px;"><svg width="16" height="16" viewBox="0 0 16 16" style=""><path d="M5.7 4.2 L9.5 8 L5.7 11.8" fill="none" stroke="#9da0a8" stroke-width="1.2" stroke-linecap="round" stroke-linejoin="round"/></svg></div><div class="a" style="left:85px;top:499px;"><svg width="16" height="16" viewBox="0 0 16 16" style="overflow:visible"><path d="M8.5 13.5 H3 Q1.5 13.5 1.5 12 V4 Q1.5 2.5 3 2.5 H5.6 Q6.2 2.5 6.6 3 L7.8 4.5 H13 Q14.5 4.5 14.5 6 V8.5 H8.5 Z" fill="#43454a" stroke="none"/><path d="M8 13.5 H3 Q1.5 13.5 1.5 12 V4 Q1.5 2.5 3 2.5 H5.6 Q6.2 2.5 6.6 3 L7.8 4.5 H13 Q14.5 4.5 14.5 6 V8" fill="none" stroke="#ced0d6" stroke-width="1.1"/><rect x="9.7" y="9.7" width="5.8" height="5.8" rx="1.5" fill="#25324d" stroke="#548af7" stroke-width="1.15"/></svg></div><div class="t" style="left:104px;top:496px;color:#dfe1e5">day11</div><div class="a" style="left:64px;top:521px;"><svg width="16" height="16" viewBox="0 0 16 16" style=""><path d="M5.7 4.2 L9.5 8 L5.7 11.8" fill="none" stroke="#9da0a8" stroke-width="1.2" stroke-linecap="round" stroke-linejoin="round"/></svg></div><div class="a" style="left:85px;top:521px;"><svg width="16" height="16" viewBox="0 0 16 16" style="overflow:visible"><path d="M8.5 13.5 H3 Q1.5 13.5 1.5 12 V4 Q1.5 2.5 3 2.5 H5.6 Q6.2 2.5 6.6 3 L7.8 4.5 H13 Q14.5 4.5 14.5 6 V8.5 H8.5 Z" fill="#43454a" stroke="none"/><path d="M8 13.5 H3 Q1.5 13.5 1.5 12 V4 Q1.5 2.5 3 2.5 H5.6 Q6.2 2.5 6.6 3 L7.8 4.5 H13 Q14.5 4.5 14.5 6 V8" fill="none" stroke="#ced0d6" stroke-width="1.1"/><rect x="9.7" y="9.7" width="5.8" height="5.8" rx="1.5" fill="#25324d" stroke="#548af7" stroke-width="1.15"/></svg></div><div class="t" style="left:104px;top:518px;color:#dfe1e5">day12</div><div class="a" style="left:64px;top:543px;"><svg width="16" height="16" viewBox="0 0 16 16" style=""><path d="M5.7 4.2 L9.5 8 L5.7 11.8" fill="none" stroke="#9da0a8" stroke-width="1.2" stroke-linecap="round" stroke-linejoin="round"/></svg></div><div class="a" style="left:85px;top:543px;"><svg width="16" height="16" viewBox="0 0 16 16" style="overflow:visible"><path d="M8.5 13.5 H3 Q1.5 13.5 1.5 12 V4 Q1.5 2.5 3 2.5 H5.6 Q6.2 2.5 6.6 3 L7.8 4.5 H13 Q14.5 4.5 14.5 6 V8.5 H8.5 Z" fill="#43454a" stroke="none"/><path d="M8 13.5 H3 Q1.5 13.5 1.5 12 V4 Q1.5 2.5 3 2.5 H5.6 Q6.2 2.5 6.6 3 L7.8 4.5 H13 Q14.5 4.5 14.5 6 V8" fill="none" stroke="#ced0d6" stroke-width="1.1"/><rect x="9.7" y="9.7" width="5.8" height="5.8" rx="1.5" fill="#25324d" stroke="#548af7" stroke-width="1.15"/></svg></div><div class="t" style="left:104px;top:540px;color:#dfe1e5">day13</div><div class="a" style="left:64px;top:565px;"><svg width="16" height="16" viewBox="0 0 16 16" style=""><path d="M5.7 4.2 L9.5 8 L5.7 11.8" fill="none" stroke="#9da0a8" stroke-width="1.2" stroke-linecap="round" stroke-linejoin="round"/></svg></div><div class="a" style="left:85px;top:565px;"><svg width="16" height="16" viewBox="0 0 16 16" style="overflow:visible"><path d="M8.5 13.5 H3 Q1.5 13.5 1.5 12 V4 Q1.5 2.5 3 2.5 H5.6 Q6.2 2.5 6.6 3 L7.8 4.5 H13 Q14.5 4.5 14.5 6 V8.5 H8.5 Z" fill="#43454a" stroke="none"/><path d="M8 13.5 H3 Q1.5 13.5 1.5 12 V4 Q1.5 2.5 3 2.5 H5.6 Q6.2 2.5 6.6 3 L7.8 4.5 H13 Q14.5 4.5 14.5 6 V8" fill="none" stroke="#ced0d6" stroke-width="1.1"/><rect x="9.7" y="9.7" width="5.8" height="5.8" rx="1.5" fill="#25324d" stroke="#548af7" stroke-width="1.15"/></svg></div><div class="t" style="left:104px;top:562px;color:#dfe1e5">day14</div><div class="a" style="left:64px;top:587px;"><svg width="16" height="16" viewBox="0 0 16 16" style=""><path d="M5.7 4.2 L9.5 8 L5.7 11.8" fill="none" stroke="#9da0a8" stroke-width="1.2" stroke-linecap="round" stroke-linejoin="round"/></svg></div><div class="a" style="left:85px;top:587px;"><svg width="16" height="16" viewBox="0 0 16 16" style="overflow:visible"><path d="M8.5 13.5 H3 Q1.5 13.5 1.5 12 V4 Q1.5 2.5 3 2.5 H5.6 Q6.2 2.5 6.6 3 L7.8 4.5 H13 Q14.5 4.5 14.5 6 V8.5 H8.5 Z" fill="#43454a" stroke="none"/><path d="M8 13.5 H3 Q1.5 13.5 1.5 12 V4 Q1.5 2.5 3 2.5 H5.6 Q6.2 2.5 6.6 3 L7.8 4.5 H13 Q14.5 4.5 14.5 6 V8" fill="none" stroke="#ced0d6" stroke-width="1.1"/><rect x="9.7" y="9.7" width="5.8" height="5.8" rx="1.5" fill="#25324d" stroke="#548af7" stroke-width="1.15"/></svg></div><div class="t" style="left:104px;top:584px;color:#dfe1e5">day15</div><div class="a" style="left:64px;top:609px;"><svg width="16" height="16" viewBox="0 0 16 16" style=""><path d="M5.7 4.2 L9.5 8 L5.7 11.8" fill="none" stroke="#9da0a8" stroke-width="1.2" stroke-linecap="round" stroke-linejoin="round"/></svg></div><div class="a" style="left:85px;top:609px;"><svg width="16" height="16" viewBox="0 0 16 16" style="overflow:visible"><path d="M8.5 13.5 H3 Q1.5 13.5 1.5 12 V4 Q1.5 2.5 3 2.5 H5.6 Q6.2 2.5 6.6 3 L7.8 4.5 H13 Q14.5 4.5 14.5 6 V8.5 H8.5 Z" fill="#43454a" stroke="none"/><path d="M8 13.5 H3 Q1.5 13.5 1.5 12 V4 Q1.5 2.5 3 2.5 H5.6 Q6.2 2.5 6.6 3 L7.8 4.5 H13 Q14.5 4.5 14.5 6 V8" fill="none" stroke="#ced0d6" stroke-width="1.1"/><rect x="9.7" y="9.7" width="5.8" height="5.8" rx="1.5" fill="#25324d" stroke="#548af7" stroke-width="1.15"/></svg></div><div class="t" style="left:104px;top:606px;color:#dfe1e5">day16</div><div class="a" style="left:64px;top:631px;"><svg width="16" height="16" viewBox="0 0 16 16" style=""><path d="M5.7 4.2 L9.5 8 L5.7 11.8" fill="none" stroke="#9da0a8" stroke-width="1.2" stroke-linecap="round" stroke-linejoin="round"/></svg></div><div class="a" style="left:85px;top:631px;"><svg width="16" height="16" viewBox="0 0 16 16" style="overflow:visible"><path d="M8.5 13.5 H3 Q1.5 13.5 1.5 12 V4 Q1.5 2.5 3 2.5 H5.6 Q6.2 2.5 6.6 3 L7.8 4.5 H13 Q14.5 4.5 14.5 6 V8.5 H8.5 Z" fill="#43454a" stroke="none"/><path d="M8 13.5 H3 Q1.5 13.5 1.5 12 V4 Q1.5 2.5 3 2.5 H5.6 Q6.2 2.5 6.6 3 L7.8 4.5 H13 Q14.5 4.5 14.5 6 V8" fill="none" stroke="#ced0d6" stroke-width="1.1"/><rect x="9.7" y="9.7" width="5.8" height="5.8" rx="1.5" fill="#25324d" stroke="#548af7" stroke-width="1.15"/></svg></div><div class="t" style="left:104px;top:628px;color:#dfe1e5">day17</div><div class="a" style="left:64px;top:653px;"><svg width="16" height="16" viewBox="0 0 16 16" style=""><path d="M5.7 4.2 L9.5 8 L5.7 11.8" fill="none" stroke="#9da0a8" stroke-width="1.2" stroke-linecap="round" stroke-linejoin="round"/></svg></div><div class="a" style="left:85px;top:653px;"><svg width="16" height="16" viewBox="0 0 16 16" style="overflow:visible"><path d="M8.5 13.5 H3 Q1.5 13.5 1.5 12 V4 Q1.5 2.5 3 2.5 H5.6 Q6.2 2.5 6.6 3 L7.8 4.5 H13 Q14.5 4.5 14.5 6 V8.5 H8.5 Z" fill="#43454a" stroke="none"/><path d="M8 13.5 H3 Q1.5 13.5 1.5 12 V4 Q1.5 2.5 3 2.5 H5.6 Q6.2 2.5 6.6 3 L7.8 4.5 H13 Q14.5 4.5 14.5 6 V8" fill="none" stroke="#ced0d6" stroke-width="1.1"/><rect x="9.7" y="9.7" width="5.8" height="5.8" rx="1.5" fill="#25324d" stroke="#548af7" stroke-width="1.15"/></svg></div><div class="t" style="left:104px;top:650px;color:#dfe1e5">day18</div><div class="a" style="left:64px;top:675px;"><svg width="16" height="16" viewBox="0 0 16 16" style=""><path d="M5.7 4.2 L9.5 8 L5.7 11.8" fill="none" stroke="#9da0a8" stroke-width="1.2" stroke-linecap="round" stroke-linejoin="round"/></svg></div><div class="a" style="left:85px;top:675px;"><svg width="16" height="16" viewBox="0 0 16 16" style="overflow:visible"><path d="M8.5 13.5 H3 Q1.5 13.5 1.5 12 V4 Q1.5 2.5 3 2.5 H5.6 Q6.2 2.5 6.6 3 L7.8 4.5 H13 Q14.5 4.5 14.5 6 V8.5 H8.5 Z" fill="#43454a" stroke="none"/><path d="M8 13.5 H3 Q1.5 13.5 1.5 12 V4 Q1.5 2.5 3 2.5 H5.6 Q6.2 2.5 6.6 3 L7.8 4.5 H13 Q14.5 4.5 14.5 6 V8" fill="none" stroke="#ced0d6" stroke-width="1.1"/><rect x="9.7" y="9.7" width="5.8" height="5.8" rx="1.5" fill="#25324d" stroke="#548af7" stroke-width="1.15"/></svg></div><div class="t" style="left:104px;top:672px;color:#dfe1e5">day19</div><div class="a" style="left:64px;top:697px;"><svg width="16" height="16" viewBox="0 0 16 16" style=""><path d="M5.7 4.2 L9.5 8 L5.7 11.8" fill="none" stroke="#9da0a8" stroke-width="1.2" stroke-linecap="round" stroke-linejoin="round"/></svg></div><div class="a" style="left:85px;top:697px;"><svg width="16" height="16" viewBox="0 0 16 16" style="overflow:visible"><path d="M8.5 13.5 H3 Q1.5 13.5 1.5 12 V4 Q1.5 2.5 3 2.5 H5.6 Q6.2 2.5 6.6 3 L7.8 4.5 H13 Q14.5 4.5 14.5 6 V8.5 H8.5 Z" fill="#43454a" stroke="none"/><path d="M8 13.5 H3 Q1.5 13.5 1.5 12 V4 Q1.5 2.5 3 2.5 H5.6 Q6.2 2.5 6.6 3 L7.8 4.5 H13 Q14.5 4.5 14.5 6 V8" fill="none" stroke="#ced0d6" stroke-width="1.1"/><rect x="9.7" y="9.7" width="5.8" height="5.8" rx="1.5" fill="#25324d" stroke="#548af7" stroke-width="1.15"/></svg></div><div class="t" style="left:104px;top:694px;color:#dfe1e5">day20</div><div class="a" style="left:64px;top:719px;"><svg width="16" height="16" viewBox="0 0 16 16" style=""><path d="M4.4 6.3 L8 9.9 L11.6 6.3" fill="none" stroke="#9da0a8" stroke-width="1.2" stroke-linecap="round" stroke-linejoin="round"/></svg></div><div class="a" style="left:85px;top:719px;"><svg width="16" height="16" viewBox="0 0 16 16" style="overflow:visible"><path d="M8.5 13.5 H3 Q1.5 13.5 1.5 12 V4 Q1.5 2.5 3 2.5 H5.6 Q6.2 2.5 6.6 3 L7.8 4.5 H13 Q14.5 4.5 14.5 6 V8.5 H8.5 Z" fill="#43454a" stroke="none"/><path d="M8 13.5 H3 Q1.5 13.5 1.5 12 V4 Q1.5 2.5 3 2.5 H5.6 Q6.2 2.5 6.6 3 L7.8 4.5 H13 Q14.5 4.5 14.5 6 V8" fill="none" stroke="#ced0d6" stroke-width="1.1"/><rect x="9.7" y="9.7" width="5.8" height="5.8" rx="1.5" fill="#25324d" stroke="#548af7" stroke-width="1.15"/></svg></div><div class="t" style="left:104px;top:716px;color:#dfe1e5">day21</div><div class="a" style="left:83px;top:741px;"><svg width="16" height="16" viewBox="0 0 16 16" style=""><path d="M4.4 6.3 L8 9.9 L11.6 6.3" fill="none" stroke="#9da0a8" stroke-width="1.2" stroke-linecap="round" stroke-linejoin="round"/></svg></div><div class="a" style="left:104px;top:741px;"><svg width="16" height="16" viewBox="0 0 16 16" style=""><path d="M1.5 4 Q1.5 2.5 3 2.5 H5.6 Q6.2 2.5 6.6 3 L7.8 4.5 H13 Q14.5 4.5 14.5 6 V12 Q14.5 13.5 13 13.5 H3 Q1.5 13.5 1.5 12 Z" fill="#25324d" stroke="#548af7" stroke-width="1.1"/></svg></div><div class="t" style="left:123px;top:738px;color:#dfe1e5">src</div><div class="a" style="left:102px;top:763px;"><svg width="16" height="16" viewBox="0 0 16 16" style=""><path d="M4.4 6.3 L8 9.9 L11.6 6.3" fill="none" stroke="#9da0a8" stroke-width="1.2" stroke-linecap="round" stroke-linejoin="round"/></svg></div><div class="a" style="left:123px;top:763px;"><svg width="16" height="16" viewBox="0 0 16 16" style=""><path d="M1.5 4 Q1.5 2.5 3 2.5 H5.6 Q6.2 2.5 6.6 3 L7.8 4.5 H13 Q14.5 4.5 14.5 6 V12 Q14.5 13.5 13 13.5 H3 Q1.5 13.5 1.5 12 Z" fill="#43454a" stroke="#ced0d6" stroke-width="1.1"/><circle cx="5.7" cy="9" r="1.6" fill="none" stroke="#ced0d6" stroke-width="1.15"/></svg></div><div class="t" style="left:142px;top:760px;color:#dfe1e5">com</div><div class="a" style="left:121px;top:785px;"><svg width="16" height="16" viewBox="0 0 16 16" style=""><path d="M4.4 6.3 L8 9.9 L11.6 6.3" fill="none" stroke="#9da0a8" stroke-width="1.2" stroke-linecap="round" stroke-linejoin="round"/></svg></div><div class="a" style="left:142px;top:785px;"><svg width="16" height="16" viewBox="0 0 16 16" style=""><path d="M1.5 4 Q1.5 2.5 3 2.5 H5.6 Q6.2 2.5 6.6 3 L7.8 4.5 H13 Q14.5 4.5 14.5 6 V12 Q14.5 13.5 13 13.5 H3 Q1.5 13.5 1.5 12 Z" fill="#43454a" stroke="#ced0d6" stroke-width="1.1"/><circle cx="5.7" cy="9" r="1.6" fill="none" stroke="#ced0d6" stroke-width="1.15"/></svg></div><div class="t" style="left:161px;top:782px;color:#dfe1e5">github</div><div class="a" style="left:140px;top:807px;"><svg width="16" height="16" viewBox="0 0 16 16" style=""><path d="M4.4 6.3 L8 9.9 L11.6 6.3" fill="none" stroke="#9da0a8" stroke-width="1.2" stroke-linecap="round" stroke-linejoin="round"/></svg></div><div class="a" style="left:161px;top:807px;"><svg width="16" height="16" viewBox="0 0 16 16" style=""><path d="M1.5 4 Q1.5 2.5 3 2.5 H5.6 Q6.2 2.5 6.6 3 L7.8 4.5 H13 Q14.5 4.5 14.5 6 V12 Q14.5 13.5 13 13.5 H3 Q1.5 13.5 1.5 12 Z" fill="#43454a" stroke="#ced0d6" stroke-width="1.1"/><circle cx="5.7" cy="9" r="1.6" fill="none" stroke="#ced0d6" stroke-width="1.15"/></svg></div><div class="t" style="left:180px;top:804px;color:#dfe1e5">lambda</div><div class="a" style="left:159px;top:829px;"><svg width="16" height="16" viewBox="0 0 16 16" style=""><path d="M5.7 4.2 L9.5 8 L5.7 11.8" fill="none" stroke="#9da0a8" stroke-width="1.2" stroke-linecap="round" stroke-linejoin="round"/></svg></div><div class="a" style="left:180px;top:829px;"><svg width="16" height="16" viewBox="0 0 16 16" style=""><path d="M1.5 4 Q1.5 2.5 3 2.5 H5.6 Q6.2 2.5 6.6 3 L7.8 4.5 H13 Q14.5 4.5 14.5 6 V12 Q14.5 13.5 13 13.5 H3 Q1.5 13.5 1.5 12 Z" fill="#43454a" stroke="#ced0d6" stroke-width="1.1"/><circle cx="5.7" cy="9" r="1.6" fill="none" stroke="#ced0d6" stroke-width="1.15"/></svg></div><div class="t" style="left:199px;top:826px;color:#dfe1e5">demo1</div><div class="a" style="left:159px;top:851px;"><svg width="16" height="16" viewBox="0 0 16 16" style=""><path d="M5.7 4.2 L9.5 8 L5.7 11.8" fill="none" stroke="#9da0a8" stroke-width="1.2" stroke-linecap="round" stroke-linejoin="round"/></svg></div><div class="a" style="left:180px;top:851px;"><svg width="16" height="16" viewBox="0 0 16 16" style=""><path d="M1.5 4 Q1.5 2.5 3 2.5 H5.6 Q6.2 2.5 6.6 3 L7.8 4.5 H13 Q14.5 4.5 14.5 6 V12 Q14.5 13.5 13 13.5 H3 Q1.5 13.5 1.5 12 Z" fill="#43454a" stroke="#ced0d6" stroke-width="1.1"/><circle cx="5.7" cy="9" r="1.6" fill="none" stroke="#ced0d6" stroke-width="1.15"/></svg></div><div class="t" style="left:199px;top:848px;color:#dfe1e5">demo2</div><div class="a" style="left:159px;top:873px;"><svg width="16" height="16" viewBox="0 0 16 16" style=""><path d="M5.7 4.2 L9.5 8 L5.7 11.8" fill="none" stroke="#9da0a8" stroke-width="1.2" stroke-linecap="round" stroke-linejoin="round"/></svg></div><div class="a" style="left:180px;top:873px;"><svg width="16" height="16" viewBox="0 0 16 16" style=""><path d="M1.5 4 Q1.5 2.5 3 2.5 H5.6 Q6.2 2.5 6.6 3 L7.8 4.5 H13 Q14.5 4.5 14.5 6 V12 Q14.5 13.5 13 13.5 H3 Q1.5 13.5 1.5 12 Z" fill="#43454a" stroke="#ced0d6" stroke-width="1.1"/><circle cx="5.7" cy="9" r="1.6" fill="none" stroke="#ced0d6" stroke-width="1.15"/></svg></div><div class="t" style="left:199px;top:870px;color:#dfe1e5">demo3</div><div class="a" style="left:159px;top:895px;"><svg width="16" height="16" viewBox="0 0 16 16" style=""><path d="M5.7 4.2 L9.5 8 L5.7 11.8" fill="none" stroke="#9da0a8" stroke-width="1.2" stroke-linecap="round" stroke-linejoin="round"/></svg></div><div class="a" style="left:180px;top:895px;"><svg width="16" height="16" viewBox="0 0 16 16" style=""><path d="M1.5 4 Q1.5 2.5 3 2.5 H5.6 Q6.2 2.5 6.6 3 L7.8 4.5 H13 Q14.5 4.5 14.5 6 V12 Q14.5 13.5 13 13.5 H3 Q1.5 13.5 1.5 12 Z" fill="#43454a" stroke="#ced0d6" stroke-width="1.1"/><circle cx="5.7" cy="9" r="1.6" fill="none" stroke="#ced0d6" stroke-width="1.15"/></svg></div><div class="t" style="left:199px;top:892px;color:#dfe1e5">demo4</div><div class="a" style="left:159px;top:917px;"><svg width="16" height="16" viewBox="0 0 16 16" style=""><path d="M5.7 4.2 L9.5 8 L5.7 11.8" fill="none" stroke="#9da0a8" stroke-width="1.2" stroke-linecap="round" stroke-linejoin="round"/></svg></div><div class="a" style="left:180px;top:917px;"><svg width="16" height="16" viewBox="0 0 16 16" style=""><path d="M1.5 4 Q1.5 2.5 3 2.5 H5.6 Q6.2 2.5 6.6 3 L7.8 4.5 H13 Q14.5 4.5 14.5 6 V12 Q14.5 13.5 13 13.5 H3 Q1.5 13.5 1.5 12 Z" fill="#43454a" stroke="#ced0d6" stroke-width="1.1"/><circle cx="5.7" cy="9" r="1.6" fill="none" stroke="#ced0d6" stroke-width="1.15"/></svg></div><div class="t" style="left:199px;top:914px;color:#dfe1e5">demo5</div><div class="a" style="left:159px;top:939px;"><svg width="16" height="16" viewBox="0 0 16 16" style=""><path d="M4.4 6.3 L8 9.9 L11.6 6.3" fill="none" stroke="#9da0a8" stroke-width="1.2" stroke-linecap="round" stroke-linejoin="round"/></svg></div><div class="a" style="left:180px;top:939px;"><svg width="16" height="16" viewBox="0 0 16 16" style=""><path d="M1.5 4 Q1.5 2.5 3 2.5 H5.6 Q6.2 2.5 6.6 3 L7.8 4.5 H13 Q14.5 4.5 14.5 6 V12 Q14.5 13.5 13 13.5 H3 Q1.5 13.5 1.5 12 Z" fill="#43454a" stroke="#ced0d6" stroke-width="1.1"/><circle cx="5.7" cy="9" r="1.6" fill="none" stroke="#ced0d6" stroke-width="1.15"/></svg></div><div class="t" style="left:199px;top:936px;color:#dfe1e5">demo6</div><div class="a" style="left:199px;top:961px;"><svg width="16" height="16" viewBox="0 0 16 16" style="overflow:visible"><circle cx="8" cy="8" r="6.5" fill="#222d49" stroke="#548af7" stroke-width="1.1"/><path d="M10.5 6.1 A3.1 3.1 0 1 0 10.5 9.9" fill="none" stroke="#4a7ce0" stroke-width="1.25" stroke-linecap="round"/><path d="M8.2 -1 H17 V8.2 H11.5 L8.2 6 Z" fill="#2b2d30"/><path d="M9.8 0.5 L15.4 3.7 L9.8 6.9 Z" fill="#2c4a33" stroke="#57965c" stroke-width="1" stroke-linejoin="round"/></svg></div><div class="a" style="left:219.5px;top:964.5px;"><svg width="11" height="11" viewBox="0 0 11 11" style=""><rect x="0.6" y="4.9" width="5.3" height="3.8" rx="0.6" fill="none" stroke="#62b866" stroke-width="1.1"/><path d="M4.7 4.9 V2.8 Q4.7 0.8 6.6 0.8 Q8.5 0.8 8.5 2.8 V3.6" fill="none" stroke="#62b866" stroke-width="1.1"/></svg></div><div class="t" style="left:234px;top:958px;color:#62b866;letter-spacing:0px">Test</div><div class="a" style="left:159px;top:983px;"><svg width="16" height="16" viewBox="0 0 16 16" style=""><path d="M4.4 6.3 L8 9.9 L11.6 6.3" fill="none" stroke="#9da0a8" stroke-width="1.2" stroke-linecap="round" stroke-linejoin="round"/></svg></div><div class="a" style="left:180px;top:983px;"><svg width="16" height="16" viewBox="0 0 16 16" style=""><path d="M1.5 4 Q1.5 2.5 3 2.5 H5.6 Q6.2 2.5 6.6 3 L7.8 4.5 H13 Q14.5 4.5 14.5 6 V12 Q14.5 13.5 13 13.5 H3 Q1.5 13.5 1.5 12 Z" fill="#43454a" stroke="#ced0d6" stroke-width="1.1"/><circle cx="5.7" cy="9" r="1.6" fill="none" stroke="#ced0d6" stroke-width="1.15"/></svg></div><div class="t" style="left:199px;top:980px;color:#dfe1e5">jmh</div><div class="t" style="left:153px;top:100px;color:#7d8086;font-weight:normal;letter-spacing:0.36px;-webkit-text-stroke:0.3px">- D:\project\java-base</div><div class="t" style="left:287px;top:100px;color:#eba767;letter-spacing:-0.05px">master / 4 Δ</div><div class="a" style="left:200px;top:1004px;width:20px;height:4px;overflow:hidden"><svg width="16" height="16" viewBox="0 0 16 16" style="overflow:visible"><circle cx="8" cy="8" r="6.5" fill="#222d49" stroke="#548af7" stroke-width="1.1"/><path d="M10.5 6.1 A3.1 3.1 0 1 0 10.5 9.9" fill="none" stroke="#4a7ce0" stroke-width="1.25" stroke-linecap="round"/><path d="M8.2 -1 H17 V8.2 H11.5 L8.2 6 Z" fill="#2b2d30"/><path d="M9.8 0.5 L15.4 3.7 L9.8 6.9 Z" fill="#2c4a33" stroke="#57965c" stroke-width="1" stroke-linejoin="round"/></svg></div><div class="a" style="left:45px;top:254px;width:322px;height:22px;border-radius:5px;background:#424448"></div><div class="a" style="left:152px;top:246px;width:158px;height:34px;background:#2b2d30"></div><div class="a" style="left:152px;top:254px;width:158px;height:22px;background:#424448"></div><div class="a" style="left:151px;top:245px;"><svg width="160" height="36" viewBox="0 0 160 36" style=""><path d="M50 1 H159 V35 H1 V1" fill="none" stroke="#f0201a" stroke-width="2" stroke-dasharray="8.2 3.3" stroke-dashoffset="3"/><path d="M0 1 H50" fill="none" stroke="#f0201a" stroke-width="2"/></svg></div><div class="a" style="left:161px;top:257px;"><svg width="16" height="16" viewBox="0 0 16 16" style="overflow:visible"><circle cx="8" cy="8" r="6.5" fill="#222d49" stroke="#548af7" stroke-width="1.1"/><path d="M10.5 6.1 A3.1 3.1 0 1 0 10.5 9.9" fill="none" stroke="#4a7ce0" stroke-width="1.25" stroke-linecap="round"/><g transform="rotate(-35 3.2 2.6)"><rect x="0.2" y="0.8" width="6" height="3.6" rx="1.8" fill="#424448" stroke="#ced0d6" stroke-width="1"/></g></svg></div><div class="a" style="left:181px;top:261px;"><svg width="8" height="8" viewBox="0 0 8 8" style=""><circle cx="4.1" cy="4" r="2.7" fill="none" stroke="#b4b8bf" stroke-width="1.1"/></svg></div><div class="t" style="left:196px;top:254px;color:#85888e;font-weight:normal;letter-spacing:0.12px;-webkit-text-stroke:0.2px">Test$$Lambda$14</div><div class="a" style="left:813px;top:65px;width:464px;height:31px;background:#2d2822"></div><div class="a" style="left:636px;top:93px;width:177px;height:3px;background:#3574f0;border-radius:1.5px"></div><div class="a" style="left:384px;top:72px;"><svg width="16" height="16" viewBox="0 0 16 16" style="overflow:visible"><circle cx="8" cy="8" r="6.5" fill="#222d49" stroke="#548af7" stroke-width="1.1"/><path d="M10.5 6.1 A3.1 3.1 0 1 0 10.5 9.9" fill="none" stroke="#4a7ce0" stroke-width="1.25" stroke-linecap="round"/><path d="M8.2 -1 H17 V8.2 H11.5 L8.2 6 Z" fill="#1e1f22"/><path d="M9.8 0.5 L15.4 3.7 L9.8 6.9 Z" fill="#2c4a33" stroke="#57965c" stroke-width="1" stroke-linejoin="round"/></svg></div><div class="tab" style="left:405px;color:#5fad65">jmh\Test.java</div><div class="a" style="left:503px;top:72px;"><svg width="16" height="16" viewBox="0 0 16 16" style="overflow:visible"><circle cx="8" cy="8" r="6.5" fill="#222d49" stroke="#548af7" stroke-width="1.1"/><path d="M10.5 6.1 A3.1 3.1 0 1 0 10.5 9.9" fill="none" stroke="#4a7ce0" stroke-width="1.25" stroke-linecap="round"/><path d="M8.2 -1 H17 V8.2 H11.5 L8.2 6 Z" fill="#1e1f22"/><path d="M9.8 0.5 L15.4 3.7 L9.8 6.9 Z" fill="#2c4a33" stroke="#57965c" stroke-width="1" stroke-linejoin="round"/></svg></div><div class="tab" style="left:524px;color:#5fad65">demo6\Test.java</div><div class="a" style="left:640px;top:72px;"><svg width="16" height="16" viewBox="0 0 16 16" style="overflow:visible"><circle cx="8" cy="8" r="6.5" fill="#222d49" stroke="#548af7" stroke-width="1.1"/><path d="M10.5 6.1 A3.1 3.1 0 1 0 10.5 9.9" fill="none" stroke="#4a7ce0" stroke-width="1.25" stroke-linecap="round"/><g transform="rotate(-35 3.2 2.6)"><rect x="0.2" y="0.8" width="6" height="3.6" rx="1.8" fill="#1e1f22" stroke="#ced0d6" stroke-width="1"/></g></svg></div><div class="tab" style="left:661px;color:#8b8e94"><span style="font-weight:normal;letter-spacing:-0.2px">Test$$Lambda$14.class</span></div><div class="a" style="left:797px;top:75px;"><svg width="10" height="10" viewBox="0 0 10 10" style=""><path d="M1.5 1.5 L8.5 8.5 M8.5 1.5 L1.5 8.5" stroke="#868a91" stroke-width="1" fill="none"/></svg></div><div class="a" style="left:816.5px;top:72px;"><svg width="16" height="16" viewBox="0 0 16 16" style="overflow:visible"><circle cx="8" cy="8" r="6.5" fill="#222d49" stroke="none"/><circle cx="8" cy="8" r="6.5" fill="none" stroke="#4a7ce0" stroke-width="1.2" stroke-dasharray="8.2 2.01" stroke-dashoffset="-1"/><path d="M10.5 6.1 A3.1 3.1 0 1 0 10.5 9.9" fill="none" stroke="#4a7ce0" stroke-width="1.25" stroke-linecap="round"/></svg></div><div class="tab" style="left:837px;color:#dfe1e5">AbstractButton.java</div><div class="a" style="left:973px;top:72px;"><svg width="16" height="16" viewBox="0 0 16 16" style=""><circle cx="8" cy="8" r="6.5" fill="#253627" stroke="#57965c" stroke-width="1"/><path d="M6.2 5.3 H9.8 M8 5.3 V10.7 M6.2 10.7 H9.8" fill="none" stroke="#57965c" stroke-width="1.1"/></svg></div><div class="tab" style="left:994px;color:#dfe1e5">ActionListener.java</div><div class="a" style="left:1126px;top:72px;"><svg width="16" height="16" viewBox="0 0 16 16" style="overflow:visible"><circle cx="8" cy="8" r="6.5" fill="#222d49" stroke="none"/><circle cx="8" cy="8" r="6.5" fill="none" stroke="#4a7ce0" stroke-width="1.2" stroke-dasharray="8.2 2.01" stroke-dashoffset="-1"/><path d="M10.5 6.1 A3.1 3.1 0 1 0 10.5 9.9" fill="none" stroke="#4a7ce0" stroke-width="1.25" stroke-linecap="round"/></svg></div><div class="tab" style="left:1147px;color:#dfe1e5">AbstractAction.java</div><div class="a" style="left:1867px;top:74.5px;width:2px;height:2px;border-radius:1px;background:#ced0d6"></div><div class="a" style="left:1867px;top:79.5px;width:2px;height:2px;border-radius:1px;background:#ced0d6"></div><div class="a" style="left:1867px;top:84.5px;width:2px;height:2px;border-radius:1px;background:#ced0d6"></div><div class="a" style="left:380px;top:96px;width:1507px;height:61px;background:#25324d"></div><div class="a" style="left:380px;top:96px;width:1507px;height:1px;background:#35538f"></div><div class="a" style="left:380px;top:126px;width:1507px;height:1px;background:#35538f"></div><div class="a" style="left:380px;top:156px;width:1507px;height:1px;background:#1e2a42"></div><div class="a" style="left:393px;top:105px;width:14px;height:14px;border-radius:7px;background:#548af7"></div><div class="a" style="left:399px;top:107.5px;width:2px;height:2px;background:#fff"></div><div class="a" style="left:399px;top:110.5px;width:2px;height:5.5px;background:#fff"></div><div class="a" style="left:416px;top:97px;height:29px;line-height:31px;font-size:12.5px;font-weight:bold;letter-spacing:0.06px;font-family:'Liberation Sans','Noto Sans CJK SC',sans-serif"><span class="z">反编译</span> .class<span class="z">文件</span>, <span class="z">字节码版本</span>: 59.0 (Java 15)</div><div class="a" style="left:396px;top:127px;height:29px;line-height:30px;font-size:12.5px;letter-spacing:-0.1px;color:#ced0d6"><span style="font-family:'Liberation Serif',serif;font-size:14px">.<i>i</i>*</span></div><div class="a" style="left:416px;top:127px;height:29px;line-height:31px;font-size:12.5px;font-weight:bold;letter-spacing:0.09px">You are editing a file that is ignored</div><div class="a" style="left:380px;top:297px;width:1397px;height:20px;background:#26282e"></div><div class="a" style="left:432px;top:157px;width:1px;height:851px;background:#313438"></div><div class="a" style="left:1395px;top:157px;width:1px;height:851px;background:#393b40"></div><div class="a" style="left:435px;top:157px;width:40px;height:20px;background:#393b40"></div><div class="a" style="left:659px;top:297px;width:80px;height:20px;background:#373b39"></div><div class="a" style="left:579px;top:392px;width:40px;height:20px;background:#373b39"></div><div class="a" style="left:465px;top:412px;width:1px;height:20px;background:#3f5a40"></div><div class="ln" style="top:157px">1</div><div class="code" style="top:157px"><span style="color:#868a91">/.../</span></div><div class="ln" style="top:177px">5</div><div class="ln" style="top:197px">6</div><div class="code" style="top:197px"><span class="k">package</span> com.github.lambda.demo6;</div><div class="ln" style="top:217px">7</div><div class="ln" style="top:237px">8</div><div class="code" style="top:237px"><span class="k">import</span> java.util.function.Function;</div><div class="ln" style="top:257px">9</div><div class="ln" style="top:277px">10</div><div class="code" style="top:277px"><span class="c">// $FF: synthetic class</span></div><div class="ln" style="top:297px;color:#cdd0d6;font-weight:bold">11</div><div class="code" style="top:297px"><span class="k">final class</span> Test$$Lambda$14 <span class="k">implements</span> Function {</div><div class="ln" style="top:317px">12</div><div class="code" style="top:317px">    <span class="k">private</span> <span class="f">Test$$Lambda$14</span>() {</div><div class="ln" style="top:337px">13</div><div class="code" style="top:337px">    }</div><div class="ln" style="top:357px">14</div><div class="ln" style="top:392px">15</div><div class="code" style="top:392px">    <span class="k">public</span> Object <span class="f">apply</span>(Object var1) {</div><div class="ln" style="top:412px">16</div><div class="code" style="top:412px">        <span class="k">return</span> ((Test.Student)var1).getName();</div><div class="ln" style="top:432px">17</div><div class="code" style="top:432px">    }</div><div class="ln" style="top:452px">18</div><div class="code" style="top:452px">}</div><div class="ln" style="top:472px">19</div><div class="a" style="left:722px;top:298px;width:2px;height:18px;background:#dfe1e5"></div><div class="a" style="left:417px;top:162px;"><svg width="10" height="10" viewBox="0 0 10 10" style=""><path d="M3 1.5 L6.5 5 L3 8.5" fill="none" stroke="#6f737a" stroke-width="1.1" stroke-linecap="round" stroke-linejoin="round"/></svg></div><div class="a" style="left:467px;top:378px;"><svg width="13" height="13" viewBox="0 0 13 13" style=""><path d="M4.5 0.9 L8.1 1.2 L9 2.6 L11.3 2.7 L12.1 6.2 L10.4 7.7 L11 9.7 L7.9 12 L6.2 11.6 L4.8 10 L2.5 9.8 L1.2 6.6 L2.3 5 L1.6 3.3 Z" fill="#74767b"/><path d="M3.6 3.5 H9.8 M3 4.1 L6.9 10.7 M9.8 5.2 L6.6 10.6" fill="none" stroke="#1e1f22" stroke-width="0.9" stroke-linecap="round"/></svg></div><div class="a" style="left:482.5px;top:381px;"><svg width="8" height="8" viewBox="0 0 8 8" style=""><path d="M0.8 2 L4 5.2 L7.2 2" fill="none" stroke="#b4b8bf" stroke-width="1" stroke-linecap="round" stroke-linejoin="round"/></svg></div><div class="a" style="left:399px;top:395px;"><svg width="18" height="14" viewBox="0 0 18 14" style=""><circle cx="6.4" cy="7.2" r="5" fill="#203a25" stroke="#4e9a57" stroke-width="1.2"/><path d="M4.9 4.9 H7.9 M6.4 4.9 V9.5 M4.9 9.5 H7.9" stroke="#6fc67c" stroke-width="1.1" fill="none"/><path d="M12.7 7.8 V0.8 M10.6 3 L12.7 0.6 L14.8 3" stroke="#f0606a" stroke-width="1.2" fill="none" stroke-linecap="round" stroke-linejoin="round"/></svg></div><div class="a" style="left:1777px;top:157px;width:110px;height:170px;background:#313234;border-radius:0 0 3px 3px"></div><div class="a" style="left:1777px;top:185px;width:110px;height:4px;background:#35538f"></div><div class="a" style="left:1777px;top:158px;width:5px;height:3px;background:#5e6066"></div><div class="a" style="left:1777px;top:166px;width:7px;height:3px;background:#8a6a55"></div><div class="a" style="left:1785px;top:166px;width:24px;height:3px;background:#6b6d72"></div><div class="a" style="left:1777px;top:174px;width:6px;height:3px;background:#8a6a55"></div><div class="a" style="left:1784px;top:174px;width:28px;height:3px;background:#6b6d72"></div><div class="a" style="left:1777px;top:182px;width:2px;height:3px;background:#a14a62"></div><div class="a" style="left:1780px;top:182px;width:4px;height:3px;background:#a14a62"></div><div class="a" style="left:1785px;top:182px;width:9px;height:3px;background:#a14a62"></div><div class="a" style="left:1795px;top:182px;width:5px;height:3px;background:#a14a62"></div><div class="a" style="left:1777px;top:185.5px;width:5px;height:3px;background:#7f82a8"></div><div class="a" style="left:1783px;top:185.5px;width:5px;height:3px;background:#7f82a8"></div><div class="a" style="left:1789px;top:185.5px;width:15px;height:3px;background:#7f95c8"></div><div class="a" style="left:1805px;top:185.5px;width:10px;height:3px;background:#a89a78"></div><div class="a" style="left:1815px;top:185.5px;width:4px;height:3px;background:#8fae9a"></div><div class="a" style="left:1819px;top:185.5px;width:4px;height:3px;background:#7f95c8"></div><div class="a" style="left:1825px;top:185.5px;width:1px;height:3px;background:#aab0c0"></div><div class="a" style="left:1781px;top:190px;width:7px;height:3px;background:#8a6a55"></div><div class="a" style="left:1789px;top:190px;width:15px;height:3px;background:#4a7399"></div><div class="a" style="left:1804px;top:190px;width:2px;height:3px;background:#6b6d72"></div><div class="a" style="left:1807px;top:190px;width:1px;height:3px;background:#6b6d72"></div><div class="a" style="left:1781px;top:194px;width:1px;height:3px;background:#6b6d72"></div><div class="a" style="left:1781px;top:205px;width:6px;height:3px;background:#8a6a55"></div><div class="a" style="left:1788px;top:205px;width:6px;height:3px;background:#6b6d72"></div><div class="a" style="left:1795px;top:205px;width:5px;height:3px;background:#5a9fc0"></div><div class="a" style="left:1800px;top:205px;width:10px;height:3px;background:#7fa594"></div><div class="a" style="left:1810px;top:205px;width:3px;height:3px;background:#6b6d72"></div><div class="a" style="left:1814px;top:205px;width:1px;height:3px;background:#6b6d72"></div><div class="a" style="left:1785px;top:209px;width:6px;height:3px;background:#8a6a55"></div><div class="a" style="left:1792px;top:209px;width:31px;height:3px;background:#6b6d72"></div><div class="a" style="left:1781px;top:213px;width:1px;height:3px;background:#6b6d72"></div><div class="a" style="left:1777px;top:217px;width:1px;height:3px;background:#6b6d72"></div><div class="a" style="left:1767px;top:327px;width:10px;height:2px;background:#4f8a6e"></div><div class="a" style="left:1767px;top:422px;width:10px;height:2px;background:#4f8a6e"></div><div class="a" style="left:1754px;top:164px;"><svg width="18" height="18" viewBox="0 0 18 18" style=""><path d="M6.78 1.72 C7.40 1.39 8.60 1.39 9.22 1.72 C9.84 2.04 9.89 3.33 10.50 3.68 C11.10 4.02 12.24 3.43 12.83 3.80 C13.42 4.17 14.02 5.22 14.05 5.92 C14.08 6.62 12.99 7.31 12.99 8.00 C12.99 8.69 14.08 9.38 14.05 10.08 C14.02 10.78 13.42 11.83 12.83 12.20 C12.24 12.57 11.10 11.98 10.50 12.32 C9.89 12.67 9.84 13.96 9.22 14.28 C8.60 14.61 7.40 14.61 6.78 14.28 C6.16 13.96 6.11 12.67 5.50 12.32 C4.90 11.98 3.76 12.57 3.17 12.20 C2.58 11.83 1.98 10.78 1.95 10.08 C1.92 9.38 3.01 8.69 3.01 8.00 C3.01 7.31 1.92 6.62 1.95 5.92 C1.98 5.22 2.58 4.17 3.17 3.80 C3.76 3.43 4.90 4.02 5.50 3.68 C6.11 3.33 6.16 2.04 6.78 1.72 Z" fill="none" stroke="#9da0a8" stroke-width="1.1" stroke-linejoin="round"/><circle cx="8" cy="8" r="2.18" fill="none" stroke="#9da0a8" stroke-width="1.1"/><path d="M17.5 13.5 V17.5 H13.5 Z" fill="#ced0d6"/></svg></div><div class="a" style="left:1888px;top:65px;width:32px;height:943px;background:#2b2d30"></div><div class="a" style="left:1896px;top:73px;"><svg width="16" height="17" viewBox="0 0 16 17" style=""><path d="M2 12.5 H14 Q12.2 10.5 12.2 7 Q12.2 2 8 2 Q3.8 2 3.8 7 Q3.8 10.5 2 12.5 Z" fill="none" stroke="#ced0d6" stroke-width="1.1" stroke-linecap="round" stroke-linejoin="round"/><path d="M6.3 14.5 H9.7 L8 16 Z" fill="#ced0d6"/><circle cx="13" cy="3" r="3.4" fill="#2b2d30"/><circle cx="13" cy="3" r="2.7" fill="#548af7"/></svg></div><div class="a" style="left:1896px;top:105px;"><svg width="16" height="16" viewBox="0 0 16 16" style=""><path d="M2.40 2.70 C2.92 2.60 4.40 2.20 5.50 2.10 C6.60 2.00 7.92 1.88 9.00 2.10 C10.08 2.32 11.20 2.75 12.00 3.40 C12.80 4.05 13.48 5.10 13.80 6.00 C14.12 6.90 14.13 7.98 13.90 8.80 C13.67 9.62 13.13 10.42 12.40 10.90 C11.67 11.38 10.43 11.68 9.50 11.70 C8.57 11.72 7.48 11.45 6.80 11.00 C6.12 10.55 5.58 9.60 5.40 9.00 C5.22 8.40 5.47 7.78 5.70 7.40 C5.93 7.02 6.45 6.75 6.80 6.70 C7.15 6.65 7.63 7.03 7.80 7.10" fill="none" stroke="#ced0d6" stroke-width="1.15" stroke-linecap="round"/><path d="M13.60 13.30 C13.08 13.40 11.60 13.80 10.50 13.90 C9.40 14.00 8.08 14.12 7.00 13.90 C5.92 13.68 4.80 13.25 4.00 12.60 C3.20 11.95 2.52 10.90 2.20 10.00 C1.88 9.10 1.87 8.02 2.10 7.20 C2.33 6.38 2.87 5.58 3.60 5.10 C4.33 4.62 5.57 4.32 6.50 4.30 C7.43 4.28 8.52 4.55 9.20 5.00 C9.88 5.45 10.42 6.40 10.60 7.00 C10.78 7.60 10.53 8.22 10.30 8.60 C10.07 8.98 9.55 9.25 9.20 9.30 C8.85 9.35 8.37 8.97 8.20 8.90" fill="none" stroke="#ced0d6" stroke-width="1.15" stroke-linecap="round"/></svg></div><div class="a" style="left:1896px;top:137px;"><svg width="16" height="16" viewBox="0 0 16 16" style=""><ellipse cx="8" cy="3.6" rx="5.6" ry="2.2" fill="none" stroke="#ced0d6" stroke-width="1.1" stroke-linecap="round" stroke-linejoin="round"/><path d="M2.4 3.6 V12.4 Q2.4 14.6 8 14.6 Q13.6 14.6 13.6 12.4 V3.6 M2.4 6.5 Q2.4 8.7 8 8.7 Q13.6 8.7 13.6 6.5 M2.4 9.4 Q2.4 11.6 8 11.6 Q13.6 11.6 13.6 9.4" fill="none" stroke="#ced0d6" stroke-width="1.1" stroke-linecap="round" stroke-linejoin="round"/></svg></div><div class="a" style="left:1829px;top:892px;width:87px;height:36px;border-radius:7px;background:linear-gradient(180deg,#2c3436,#283033);border:1px solid #3a4548;box-shadow:0 2px 5px rgba(0,0,0,0.55)"></div><div class="a" style="left:1843px;top:926px;width:60px;height:1.5px;background:linear-gradient(90deg,rgba(60,220,230,0),rgba(60,220,230,0.9) 50%,rgba(60,220,230,0))"></div><div class="a" style="left:1841px;top:897px;height:24px;line-height:24px;font-size:17px;color:#35e3e8;font-family:'Noto Sans CJK SC','Liberation Sans',sans-serif">英</div><div class="a" style="left:1869px;top:905px;width:3.5px;height:3.5px;border-radius:2px;background:#35e3e8"></div><div class="a" style="left:1874px;top:908px;"><svg width="5" height="7" viewBox="0 0 5 7" style=""><path d="M1 0.5 H4 V3 Q4 5.5 1.5 6.3 L1.2 5.4 Q2.6 4.8 2.6 3.4 H1 Z" fill="#35e3e8"/></svg></div><div class="a" style="left:1887px;top:901px;"><svg width="18" height="17" viewBox="0 0 18 17" style=""><path d="M6 1.5 Q9 3.6 12 1.5 L17 6 L14.6 8.6 L13.3 7.6 V15.5 H4.7 V7.6 L3.4 8.6 L1 6 Z" fill="none" stroke="#35e3e8" stroke-width="1.7" stroke-linejoin="miter"/></svg></div><div class="a" style="left:14px;top:1017px;width:7px;height:7px;border-radius:1.5px;border:1.2px solid #548af7;background:#25324d"></div><div class="sb" style="left:25px">java-base</div><div class="sb" style="left:102px">com</div><div class="sb" style="left:149px">github</div><div class="sb" style="left:209px">lambda</div><div class="sb" style="left:272px">demo6</div><div class="a" style="left:87px;top:1015px;"><svg width="8" height="10" viewBox="0 0 8 10" style=""><path d="M2 1.5 L5.5 5 L2 8.5" fill="none" stroke="#868a91" stroke-width="1.1" stroke-linecap="round" stroke-linejoin="round"/></svg></div><div class="a" style="left:134px;top:1015px;"><svg width="8" height="10" viewBox="0 0 8 10" style=""><path d="M2 1.5 L5.5 5 L2 8.5" fill="none" stroke="#868a91" stroke-width="1.1" stroke-linecap="round" stroke-linejoin="round"/></svg></div><div class="a" style="left:194px;top:1015px;"><svg width="8" height="10" viewBox="0 0 8 10" style=""><path d="M2 1.5 L5.5 5 L2 8.5" fill="none" stroke="#868a91" stroke-width="1.1" stroke-linecap="round" stroke-linejoin="round"/></svg></div><div class="a" style="left:257px;top:1015px;"><svg width="8" height="10" viewBox="0 0 8 10" style=""><path d="M2 1.5 L5.5 5 L2 8.5" fill="none" stroke="#868a91" stroke-width="1.1" stroke-linecap="round" stroke-linejoin="round"/></svg></div><div class="a" style="left:319px;top:1015px;"><svg width="8" height="10" viewBox="0 0 8 10" style=""><path d="M2 1.5 L5.5 5 L2 8.5" fill="none" stroke="#868a91" stroke-width="1.1" stroke-linecap="round" stroke-linejoin="round"/></svg></div><div class="a" style="left:333px;top:1012px;"><svg width="16" height="16" viewBox="0 0 16 16" style="overflow:visible"><circle cx="8" cy="8" r="6.5" fill="#222d49" stroke="#548af7" stroke-width="1.1"/><path d="M10.5 6.1 A3.1 3.1 0 1 0 10.5 9.9" fill="none" stroke="#4a7ce0" stroke-width="1.25" stroke-linecap="round"/><g transform="rotate(-35 3.2 2.6)"><rect x="0.2" y="0.8" width="6" height="3.6" rx="1.8" fill="#2b2d30" stroke="#ced0d6" stroke-width="1"/></g></svg></div><div class="sb" style="left:354px;letter-spacing:-0.2px">Test$$Lambda$14</div><div class="a" style="left:1469px;top:1013px;width:14px;height:14px;border-radius:7px;background:#2f6ad0"></div><div class="a" style="left:1469px;top:1013px;"><svg width="14" height="14" viewBox="0 0 14 14" style=""><path d="M7 3.6 L10.6 9.8 H3.4 Z" fill="none" stroke="#fff" stroke-width="1.1" stroke-linejoin="round"/></svg></div><div class="sb" style="left:1486px;letter-spacing:0.18px">4 Δ/up-to-date</div><div class="sb" style="left:1584px;letter-spacing:-0.8px">11:37</div><div class="a" style="left:1629px;top:1015px;"><svg width="16" height="12" viewBox="0 0 16 12" style=""><path d="M7.9 5.8 Q5.2 1.6 2.6 2.6 Q0.9 3.4 0.9 5.8 Q0.9 8.2 2.6 9 Q5.2 10 7.9 5.8 Q10.6 1.6 12.6 2.3 M7.9 5.8 Q10.6 10 13 9.1 Q14.9 8.3 14.9 6" fill="none" stroke="#63666b" stroke-width="1.7" stroke-linecap="round"/><circle cx="14.3" cy="2.3" r="1" fill="#63666b"/></svg></div><div class="a" style="left:1662px;top:1011px;"><svg width="18" height="18" viewBox="0 0 18 18" style=""><path d="M6.2 1.2 L11.2 1.6 L12.4 3.6 L15.6 3.8 L16.8 8.6 L14.4 10.6 L15.2 13.4 L11 16.6 L8.6 16 L6.6 13.8 L3.4 13.6 L1.6 9.2 L3.2 7 L2.2 4.6 Z" fill="#6244ea"/><path d="M6.2 1.2 L11.2 1.6 L12.4 3.6 L15.6 3.8 L16.2 6.4 L2.6 6 L2.2 4.6 Z" fill="#7468fa" opacity="0.75"/><path d="M5 4.8 H13.6 M4.2 5.6 L9.6 14.8 M13.6 7.2 L9.2 14.6 M6.4 3.2 L5 4.8 M14.4 8.4 L13.6 7.2 M4.6 11.6 H8" fill="none" stroke="#fff" stroke-width="1.3" stroke-linecap="round"/></svg></div><div class="a" style="left:1696px;top:1014px;width:6.5px;height:6.5px;background:#f25022"></div><div class="a" style="left:1703.5px;top:1014px;width:6.5px;height:6.5px;background:#7fba00"></div><div class="a" style="left:1696px;top:1021.5px;width:6.5px;height:6.5px;background:#00a4ef"></div><div class="a" style="left:1703.5px;top:1021.5px;width:6.5px;height:6.5px;background:#ffb900"></div><div class="sb" style="left:1727px">CRLF</div><div class="sb" style="left:1773px;color:#6f737a;font-weight:normal">UTF-8</div><div class="sb" style="left:1826px;font-family:'Liberation Sans','Noto Sans CJK SC',sans-serif">4 <span class="z">个空格</span></div><div class="a" style="left:1888px;top:1012px;"><svg width="16" height="16" viewBox="0 0 16 16" style=""><rect x="1.5" y="7" width="9" height="7" rx="1.5" fill="none" stroke="#ced0d6" stroke-width="1.1" stroke-linecap="round" stroke-linejoin="round"/><path d="M7.5 7 V4.5 Q7.5 2 10.5 2 Q13.5 2 13.5 4.5 V5.5" fill="none" stroke="#ced0d6" stroke-width="1.1" stroke-linecap="round" stroke-linejoin="round"/><rect x="5.3" y="9.8" width="1.5" height="1.8" fill="#ced0d6"/></svg></div></body></html>
